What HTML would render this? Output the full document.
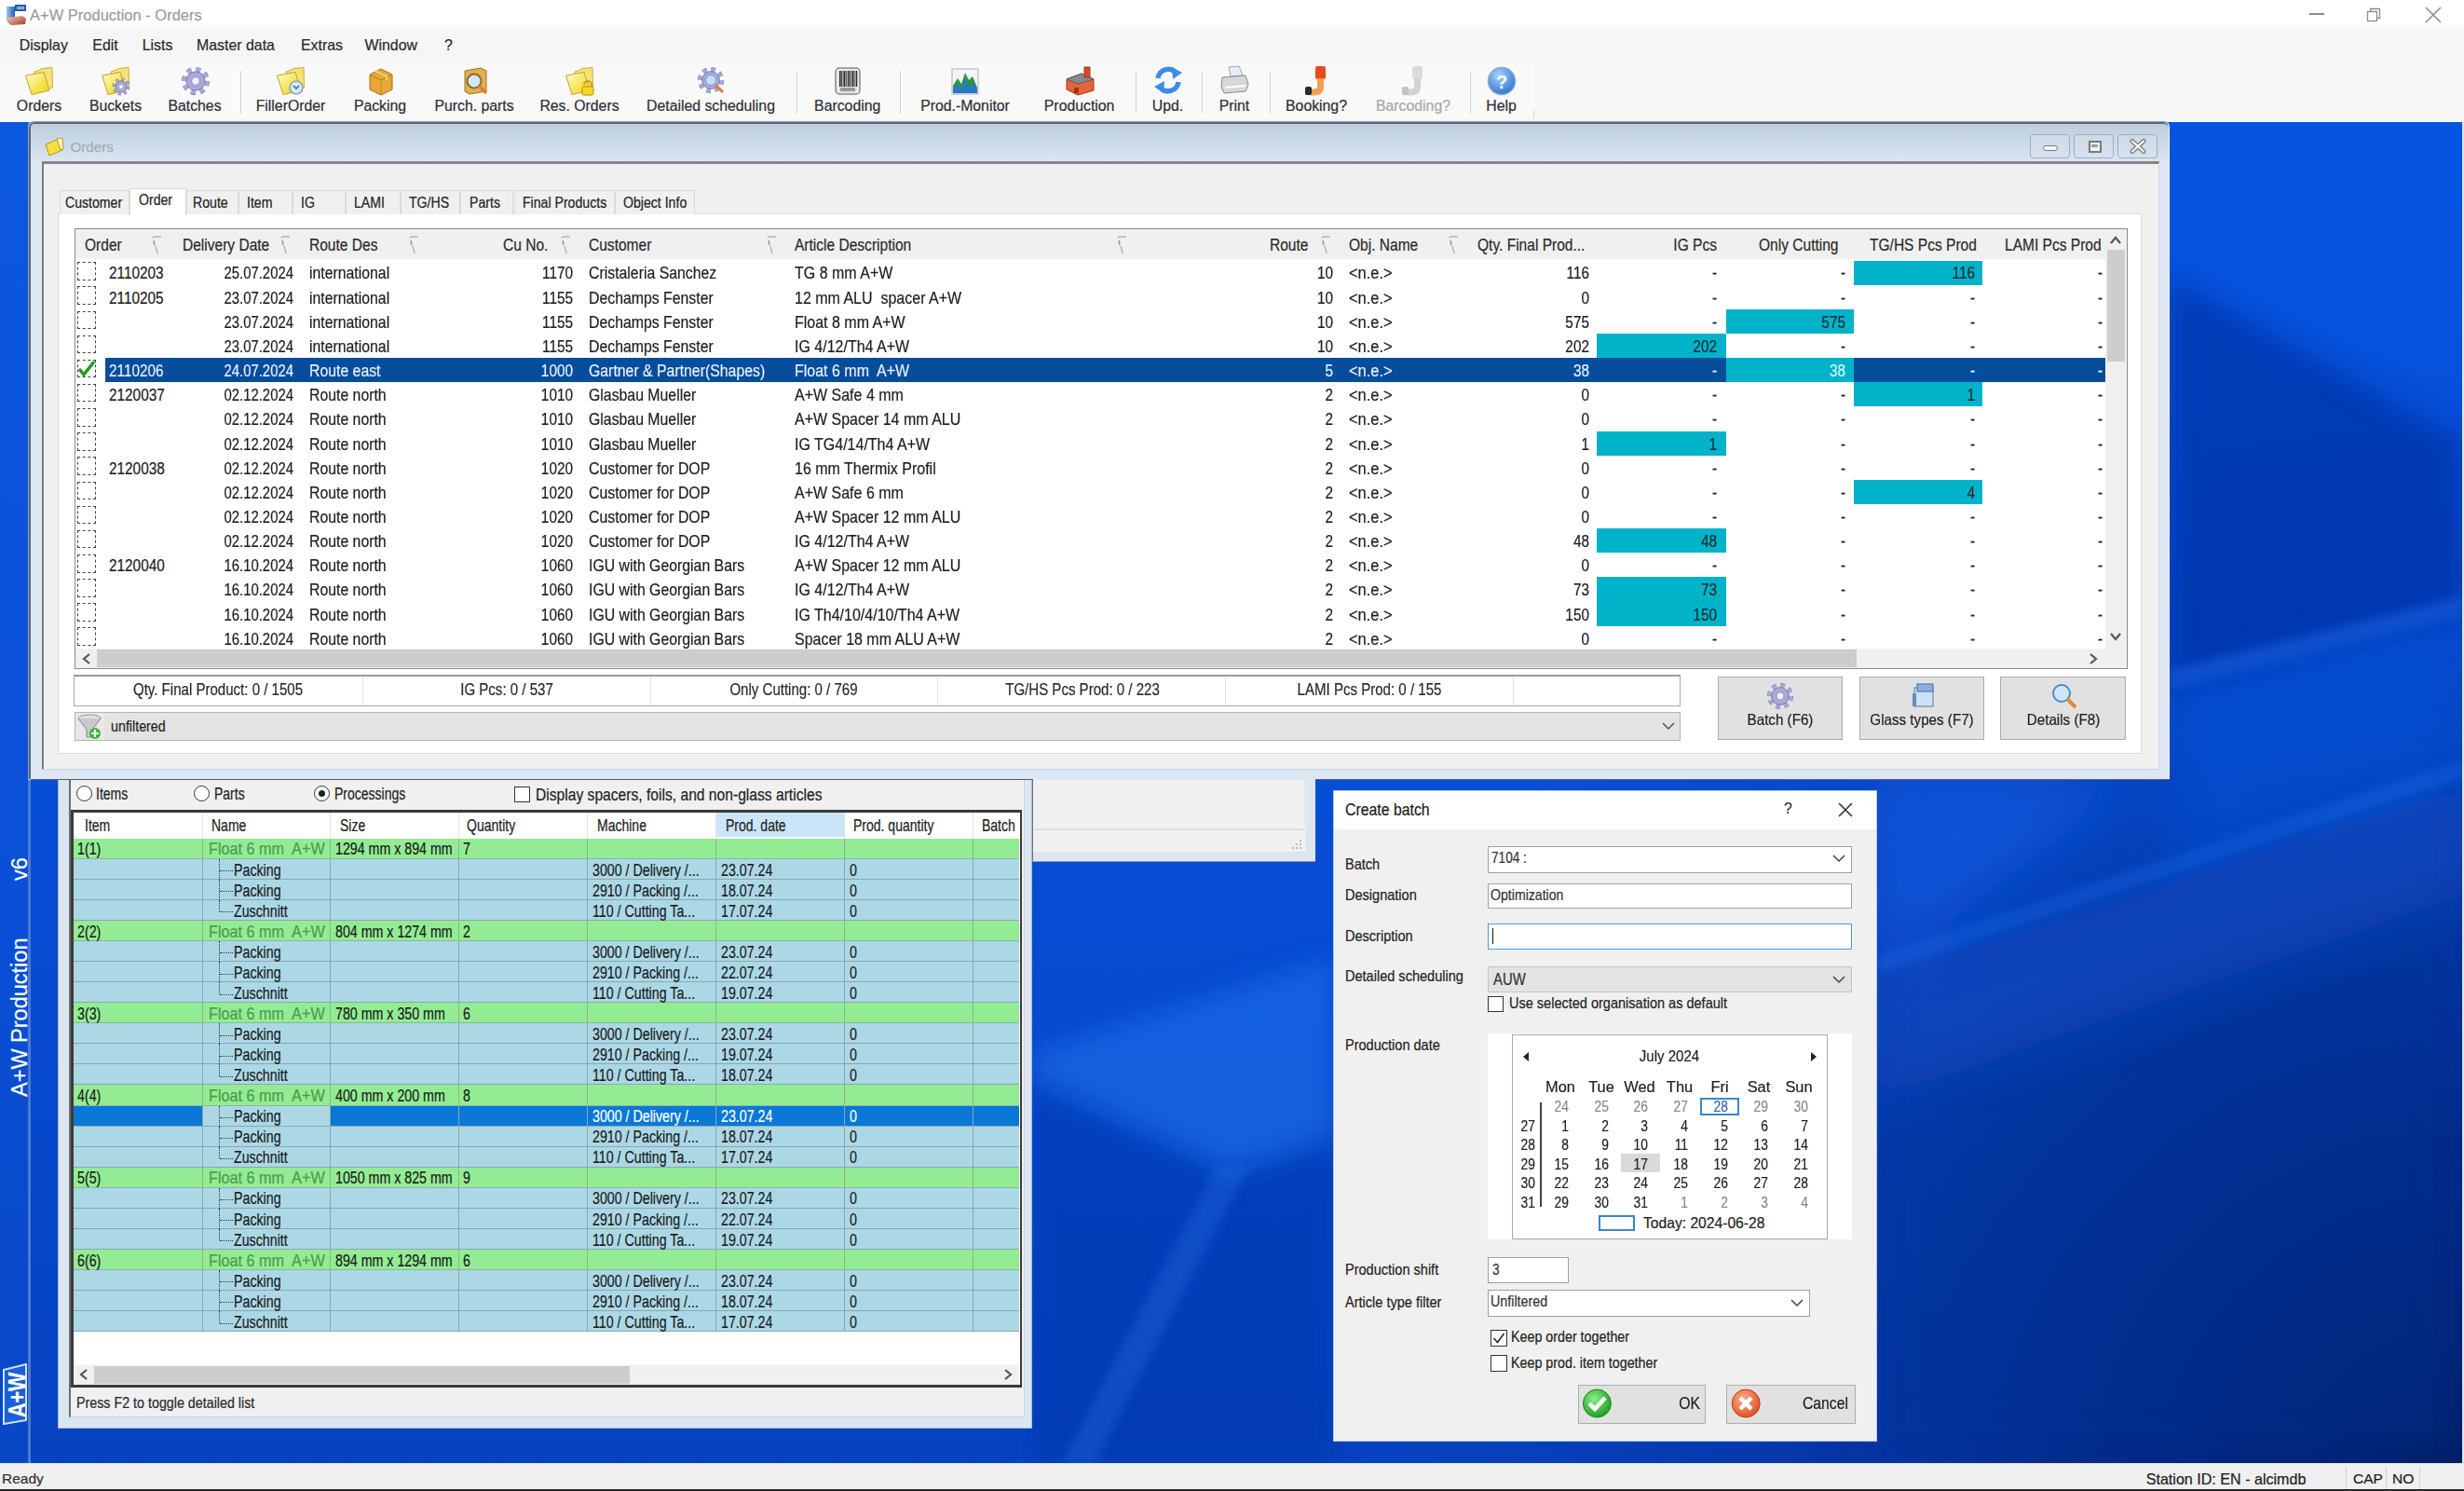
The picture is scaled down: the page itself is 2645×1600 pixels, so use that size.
<!DOCTYPE html>
<html><head><meta charset="utf-8"><title>A+W Production - Orders</title>
<style>
html,body{margin:0;padding:0;}
body{width:2645px;height:1600px;overflow:hidden;position:relative;font-family:"Liberation Sans", sans-serif;background:#0a4fd2;-webkit-text-stroke:0.2px currentColor;}
div,svg{box-sizing:border-box;}
</style></head><body>
<svg style="position:absolute;left:0px;top:0px;" width="2645" height="1600" viewBox="0 0 2645 1600">
<defs>
<linearGradient id="bgv" x1="0" y1="131" x2="0" y2="1570" gradientUnits="userSpaceOnUse">
<stop offset="0" stop-color="#0654e0"/>
<stop offset="0.5" stop-color="#074ed6"/>
<stop offset="1" stop-color="#0642c0"/>
</linearGradient>
<radialGradient id="dark" cx="2645" cy="1600" r="1250" gradientUnits="userSpaceOnUse">
<stop offset="0" stop-color="#021a5a" stop-opacity="1"/>
<stop offset="0.3" stop-color="#03237c" stop-opacity="0.9"/>
<stop offset="0.65" stop-color="#05329c" stop-opacity="0.45"/>
<stop offset="1" stop-color="#0640b8" stop-opacity="0"/>
</radialGradient>
<filter id="b6" x="-20%" y="-20%" width="140%" height="140%"><feGaussianBlur stdDeviation="6"/></filter>
<filter id="b14" x="-20%" y="-20%" width="140%" height="140%"><feGaussianBlur stdDeviation="14"/></filter>
<filter id="b30" x="-20%" y="-20%" width="140%" height="140%"><feGaussianBlur stdDeviation="30"/></filter>
</defs>
<rect x="0" y="131" width="2645" height="1440" fill="url(#bgv)"/>
<rect x="0" y="131" width="2645" height="1440" fill="url(#dark)"/>
<g filter="url(#b30)">
<polygon points="2014,1045 2645,835 2645,1570 2014,1570" fill="#05309a" opacity="0.45"/>
<polygon points="2014,836 2300,836 2014,1040" fill="#0c5ee6" opacity="0.6"/>
<polygon points="2014,1050 2645,840 2645,960 2014,1180" fill="#1460e0" opacity="0.35"/>
<polygon points="2329,745 2645,665 2645,830 2329,930" fill="#0a56e0" opacity="0.45"/>
</g>
<g filter="url(#b14)">
<polygon points="2329,297 2583,439 2645,470 2645,648 2329,728" fill="#0834a8" opacity="0.72"/>
<polygon points="1109,1129 1431,1029 1431,1218 1321,1254 1109,1155" fill="#1f72ee" opacity="0.55"/>
<polygon points="1109,1165 1321,1260 1431,1225 1431,1570 1109,1570" fill="#0838a8" opacity="0.45"/>
</g>
<g filter="url(#b6)">
<polygon points="2329,720 2645,640 2645,658 2329,738" fill="#2a7af2" opacity="0.3"/>
<polygon points="2014,1026 2645,816 2645,834 2014,1044" fill="#1c6cf0" opacity="0.35"/>
<polygon points="1305,1252 1340,1252 1175,1570 1140,1570" fill="#2a7af0" opacity="0.28"/>
</g>
</svg><div style="position:absolute;left:0px;top:131px;width:30px;height:1440px;background:linear-gradient(180deg,#0d58e0 0%,#0a4fd6 60%,#0847c4 100%);"></div><div style="position:absolute;left:30px;top:131px;width:3px;height:1440px;background:#4a7ad4;"></div><div style="position:absolute;left:6.5px;top:1177px;height:28px;transform-origin:0 0;transform:rotate(-90deg);white-space:pre;color:#fff;font-size:23.5px;line-height:28px;">A+W Production</div><div style="position:absolute;left:6.5px;top:945px;height:28px;transform-origin:0 0;transform:rotate(-90deg);white-space:pre;color:#fff;font-size:23.5px;line-height:28px;">v6</div><svg style="position:absolute;left:2px;top:1462px;" width="28" height="68" viewBox="0 0 28 68"><polygon points="2,8 26,2 26,62 2,66" fill="#1a5fd8" stroke="#cfe0ff" stroke-width="2"/></svg><div style="position:absolute;left:5px;top:1521px;height:26px;transform-origin:0 0;transform:rotate(-90deg) scaleX(0.86);white-space:pre;color:#fff;font-size:25px;font-weight:bold;line-height:26px;">A+W</div><div style="position:absolute;left:0px;top:0px;width:2645px;height:32px;background:linear-gradient(180deg,#ffffff 0px,#ffffff 24px,#f8f8f8 32px);"></div><svg style="position:absolute;left:4px;top:2px;" width="24" height="26" viewBox="0 0 24 26"><defs><linearGradient id="aic" x1="0" y1="0" x2="1" y2="0"><stop offset="0" stop-color="#9cc8f0"/><stop offset="1" stop-color="#2a5aa8"/></linearGradient><linearGradient id="aic2" x1="0" y1="0" x2="1" y2="1"><stop offset="0" stop-color="#f4c8b8"/><stop offset="1" stop-color="#a03a2a"/></linearGradient></defs><rect x="3" y="5" width="9" height="15" fill="url(#aic)"/><rect x="12" y="3" width="12" height="7" fill="#2e5a98"/><rect x="14" y="5" width="8" height="3" fill="#8ab0e0"/><path d="M4 17 L20 15 L24 18 L23 24 L8 25 L4 22 Z" fill="url(#aic2)"/></svg><div style="position:absolute;left:32px;top:5.78px;height:21.45px;line-height:21.45px;font-size:16.5px;color:#9b9b9b;white-space:pre;">A+W Production - Orders</div><div style="position:absolute;left:2479px;top:14px;width:16px;height:1.5px;background:#8a8a8a;"></div><svg style="position:absolute;left:2538px;top:6px;" width="20" height="20" viewBox="0 0 20 20"><rect x="3.5" y="6.5" width="10" height="10" fill="none" stroke="#8a8a8a" stroke-width="1.3"/><path d="M6.5 6.5 V3.5 H16.5 V13.5 H13.5" fill="none" stroke="#8a8a8a" stroke-width="1.3"/></svg><svg style="position:absolute;left:2601px;top:5px;" width="22" height="22" viewBox="0 0 22 22"><path d="M3 3 L19 19 M19 3 L3 19" stroke="#8a8a8a" stroke-width="1.5"/></svg><div style="position:absolute;left:0px;top:32px;width:2645px;height:34px;background:#f6f6f6;"></div><div style="position:absolute;left:20.8px;top:38.96px;height:20.67px;line-height:20.67px;font-size:15.9px;color:#2a2a2a;white-space:pre;">Display</div><div style="position:absolute;left:99.3px;top:38.96px;height:20.67px;line-height:20.67px;font-size:15.9px;color:#2a2a2a;white-space:pre;">Edit</div><div style="position:absolute;left:152.7px;top:38.96px;height:20.67px;line-height:20.67px;font-size:15.9px;color:#2a2a2a;white-space:pre;">Lists</div><div style="position:absolute;left:211px;top:38.96px;height:20.67px;line-height:20.67px;font-size:15.9px;color:#2a2a2a;white-space:pre;">Master data</div><div style="position:absolute;left:323px;top:38.96px;height:20.67px;line-height:20.67px;font-size:15.9px;color:#2a2a2a;white-space:pre;">Extras</div><div style="position:absolute;left:391.5px;top:38.96px;height:20.67px;line-height:20.67px;font-size:15.9px;color:#2a2a2a;white-space:pre;">Window</div><div style="position:absolute;left:477px;top:38.96px;height:20.67px;line-height:20.67px;font-size:15.9px;color:#2a2a2a;white-space:pre;">?</div><div style="position:absolute;left:0px;top:66px;width:2645px;height:65px;background:#f7f7f7;"></div><div style="position:absolute;left:4px;top:67px;width:1643px;height:60px;background:#f9f9f9;"></div><div style="position:absolute;left:257.5px;top:76px;width:1.2px;height:46px;background:#d4d4d4;"></div><div style="position:absolute;left:854.6px;top:76px;width:1.2px;height:46px;background:#d4d4d4;"></div><div style="position:absolute;left:966px;top:76px;width:1.2px;height:46px;background:#d4d4d4;"></div><div style="position:absolute;left:1219px;top:76px;width:1.2px;height:46px;background:#d4d4d4;"></div><div style="position:absolute;left:1290px;top:76px;width:1.2px;height:46px;background:#d4d4d4;"></div><div style="position:absolute;left:1363px;top:76px;width:1.2px;height:46px;background:#d4d4d4;"></div><div style="position:absolute;left:1578px;top:76px;width:1.2px;height:46px;background:#d4d4d4;"></div><div style="position:absolute;left:1646px;top:118px;width:1px;height:9px;background:#d8d8d8;"></div><div style="position:absolute;left:-558px;width:1200px;text-align:center;top:104.03px;height:20.54px;line-height:20.54px;font-size:15.8px;color:#2e2e36;white-space:pre;">Orders</div><div style="position:absolute;left:-476px;width:1200px;text-align:center;top:104.03px;height:20.54px;line-height:20.54px;font-size:15.8px;color:#2e2e36;white-space:pre;">Buckets</div><div style="position:absolute;left:-391px;width:1200px;text-align:center;top:104.03px;height:20.54px;line-height:20.54px;font-size:15.8px;color:#2e2e36;white-space:pre;">Batches</div><div style="position:absolute;left:-288px;width:1200px;text-align:center;top:104.03px;height:20.54px;line-height:20.54px;font-size:15.8px;color:#2e2e36;white-space:pre;">FillerOrder</div><div style="position:absolute;left:-192px;width:1200px;text-align:center;top:104.03px;height:20.54px;line-height:20.54px;font-size:15.8px;color:#2e2e36;white-space:pre;">Packing</div><div style="position:absolute;left:-91px;width:1200px;text-align:center;top:104.03px;height:20.54px;line-height:20.54px;font-size:15.8px;color:#2e2e36;white-space:pre;">Purch. parts</div><div style="position:absolute;left:22px;width:1200px;text-align:center;top:104.03px;height:20.54px;line-height:20.54px;font-size:15.8px;color:#2e2e36;white-space:pre;">Res. Orders</div><div style="position:absolute;left:163px;width:1200px;text-align:center;top:104.03px;height:20.54px;line-height:20.54px;font-size:15.8px;color:#2e2e36;white-space:pre;">Detailed scheduling</div><div style="position:absolute;left:309.70000000000005px;width:1200px;text-align:center;top:104.03px;height:20.54px;line-height:20.54px;font-size:15.8px;color:#2e2e36;white-space:pre;">Barcoding</div><div style="position:absolute;left:436px;width:1200px;text-align:center;top:104.03px;height:20.54px;line-height:20.54px;font-size:15.8px;color:#2e2e36;white-space:pre;">Prod.-Monitor</div><div style="position:absolute;left:558.5999999999999px;width:1200px;text-align:center;top:104.03px;height:20.54px;line-height:20.54px;font-size:15.8px;color:#2e2e36;white-space:pre;">Production</div><div style="position:absolute;left:653.5px;width:1200px;text-align:center;top:104.03px;height:20.54px;line-height:20.54px;font-size:15.8px;color:#2e2e36;white-space:pre;">Upd.</div><div style="position:absolute;left:725px;width:1200px;text-align:center;top:104.03px;height:20.54px;line-height:20.54px;font-size:15.8px;color:#2e2e36;white-space:pre;">Print</div><div style="position:absolute;left:813px;width:1200px;text-align:center;top:104.03px;height:20.54px;line-height:20.54px;font-size:15.8px;color:#2e2e36;white-space:pre;">Booking?</div><div style="position:absolute;left:917px;width:1200px;text-align:center;top:104.03px;height:20.54px;line-height:20.54px;font-size:15.8px;color:#a8a8a8;white-space:pre;">Barcoding?</div><div style="position:absolute;left:1011.5px;width:1200px;text-align:center;top:104.03px;height:20.54px;line-height:20.54px;font-size:15.8px;color:#2e2e36;white-space:pre;">Help</div><svg style="position:absolute;left:26px;top:71.6px;" width="34" height="32" viewBox="0 0 34 32"><defs><linearGradient id="g1" x1="0" y1="0" x2="1" y2="1"><stop offset="0" stop-color="#fffbd0"/><stop offset="1" stop-color="#f2d200"/></linearGradient></defs>
<path d="M11 5 L17 3 L19 1.5 L30 0.5 L30.5 22 L13 27 Z" fill="#f4e27a" stroke="#c9ad38" stroke-width="1"/>
<path d="M1.5 9 L21 5.5 L27 25 L8 29.5 Z" fill="url(#g1)" stroke="#c4a22a" stroke-width="1"/></svg><svg style="position:absolute;left:108px;top:71.6px;" width="34" height="32" viewBox="0 0 34 32"><defs><linearGradient id="g2" x1="0" y1="0" x2="1" y2="1"><stop offset="0" stop-color="#fffbd0"/><stop offset="1" stop-color="#f2d200"/></linearGradient></defs>
<path d="M11 5 L17 3 L19 1.5 L30 0.5 L30.5 22 L13 27 Z" fill="#f4e27a" stroke="#c9ad38" stroke-width="1"/>
<path d="M1.5 9 L21 5.5 L27 25 L8 29.5 Z" fill="url(#g2)" stroke="#c4a22a" stroke-width="1"/><circle cx="22" cy="21" r="7.48" fill="none" stroke="#8080b8" stroke-width="3.95" stroke-dasharray="2.94 2.94"/><circle cx="22" cy="21" r="7.48" fill="none" stroke="#a9a9da" stroke-width="2.55" stroke-dasharray="2.94 2.94"/><circle cx="22" cy="21" r="6.12" fill="#a9a9da" stroke="#7a7ab4" stroke-width="1"/><circle cx="22" cy="21" r="2.55" fill="#f4f4fc" stroke="#8a8ac0" stroke-width="0.8"/></svg><svg style="position:absolute;left:194px;top:71px;" width="32" height="32" viewBox="0 0 32 32"><circle cx="16" cy="16" r="12.32" fill="none" stroke="#8080b8" stroke-width="5.60" stroke-dasharray="4.84 4.84"/><circle cx="16" cy="16" r="12.32" fill="none" stroke="#a9a9da" stroke-width="4.20" stroke-dasharray="4.84 4.84"/><circle cx="16" cy="16" r="10.08" fill="#a9a9da" stroke="#7a7ab4" stroke-width="1"/><circle cx="16" cy="16" r="4.20" fill="#f4f4fc" stroke="#8a8ac0" stroke-width="0.8"/></svg><svg style="position:absolute;left:296px;top:71.6px;" width="34" height="32" viewBox="0 0 34 32"><defs><linearGradient id="g3" x1="0" y1="0" x2="1" y2="1"><stop offset="0" stop-color="#fffbd0"/><stop offset="1" stop-color="#f2d200"/></linearGradient></defs>
<path d="M11 5 L17 3 L19 1.5 L30 0.5 L30.5 22 L13 27 Z" fill="#f4e27a" stroke="#c9ad38" stroke-width="1"/>
<path d="M1.5 9 L21 5.5 L27 25 L8 29.5 Z" fill="url(#g3)" stroke="#c4a22a" stroke-width="1"/><circle cx="22" cy="22" r="7" fill="#d8e8fa" stroke="#6a8ac0" stroke-width="1.2"/><path d="M19 20 L22 23 L25 20" stroke="#3a6ab0" stroke-width="1.6" fill="none"/></svg><svg style="position:absolute;left:393px;top:70px;" width="32" height="34" viewBox="0 0 32 34"><path d="M4 10 L16 4 L28 10 L28 26 L16 32 L4 26 Z" fill="#e8a838" stroke="#a86a10"/><path d="M4 10 L16 16 L28 10" stroke="#b87818" fill="none"/><path d="M16 16 L16 32" stroke="#c88a28"/><path d="M10 6 L22 12 L22 16" stroke="#f8d070" stroke-width="2" fill="none"/></svg><svg style="position:absolute;left:494px;top:70px;" width="34" height="34" viewBox="0 0 34 34"><path d="M5 6 L22 3 L28 6 L28 28 L10 31 L5 28 Z" fill="#e0b050" stroke="#a07020"/><circle cx="15" cy="17" r="7.5" fill="#cfe8fa" stroke="#8a6a30" stroke-width="2"/><path d="M20 22 L28 30" stroke="#e07a38" stroke-width="3.2"/></svg><svg style="position:absolute;left:606px;top:71.6px;" width="34" height="32" viewBox="0 0 34 32"><defs><linearGradient id="g4" x1="0" y1="0" x2="1" y2="1"><stop offset="0" stop-color="#fffbd0"/><stop offset="1" stop-color="#f2d200"/></linearGradient></defs>
<path d="M11 5 L17 3 L19 1.5 L30 0.5 L30.5 22 L13 27 Z" fill="#f4e27a" stroke="#c9ad38" stroke-width="1"/>
<path d="M1.5 9 L21 5.5 L27 25 L8 29.5 Z" fill="url(#g4)" stroke="#c4a22a" stroke-width="1"/><path d="M21 19 A4 4 0 0 1 29 19 L29 22" stroke="#c8a020" stroke-width="2" fill="none"/><rect x="19" y="21" width="12" height="9" rx="1.5" fill="#f8d820" stroke="#b09010"/></svg><svg style="position:absolute;left:747px;top:70px;" width="34" height="34" viewBox="0 0 34 34"><circle cx="16" cy="16" r="11.44" fill="none" stroke="#8080b8" stroke-width="5.30" stroke-dasharray="4.49 4.49"/><circle cx="16" cy="16" r="11.44" fill="none" stroke="#a9a9da" stroke-width="3.90" stroke-dasharray="4.49 4.49"/><circle cx="16" cy="16" r="9.36" fill="#a9a9da" stroke="#7a7ab4" stroke-width="1"/><circle cx="16" cy="16" r="3.90" fill="#f4f4fc" stroke="#8a8ac0" stroke-width="0.8"/><circle cx="16" cy="16" r="5.5" fill="#bfe0f8" stroke="#7aa0c8"/><path d="M21 21 L29 29" stroke="#e07a38" stroke-width="3"/></svg><svg style="position:absolute;left:894px;top:70px;" width="32" height="34" viewBox="0 0 32 34"><rect x="3" y="3" width="26" height="28" rx="4" fill="#e8e8e8" stroke="#8a8a8a" stroke-width="1.5"/><rect x="7.0" y="6" width="1.6" height="17" fill="#2a2a2a"/><rect x="9.2" y="6" width="1.1" height="17" fill="#2a2a2a"/><rect x="11.4" y="6" width="1.6" height="17" fill="#2a2a2a"/><rect x="13.6" y="6" width="1.1" height="17" fill="#2a2a2a"/><rect x="15.8" y="6" width="1.6" height="17" fill="#2a2a2a"/><rect x="18.0" y="6" width="1.1" height="17" fill="#2a2a2a"/><rect x="20.2" y="6" width="1.6" height="17" fill="#2a2a2a"/><rect x="22.4" y="6" width="1.1" height="17" fill="#2a2a2a"/><rect x="24.6" y="6" width="1.6" height="17" fill="#2a2a2a"/><rect x="8" y="24" width="16" height="4" fill="#9a9a9a"/></svg><svg style="position:absolute;left:1020px;top:70px;" width="32" height="34" viewBox="0 0 32 34"><rect x="2" y="4" width="28" height="27" fill="#f2f6fa" stroke="#a8b0b8"/><path d="M3 30 L3 22 L8 14 L12 20 L16 8 L20 16 L24 12 L29 24 L29 30 Z" fill="#2a9a3a"/><path d="M3 30 L3 26 L7 20 L12 26 L15 14 L20 24 L25 18 L29 26 L29 30 Z" fill="#2a78c8"/></svg><svg style="position:absolute;left:1141px;top:69px;" width="36" height="34" viewBox="0 0 36 34"><path d="M4 16 L20 10 L33 16 L33 28 L16 33 L4 27 Z" fill="#e8623a" stroke="#a03818"/><path d="M4 16 L16 21 L33 16 L20 10 Z" fill="#8a8a8a" stroke="#5a5a5a"/><rect x="23" y="3" width="6" height="11" fill="#d8482a" stroke="#a03818"/><rect x="12" y="25" width="5" height="6" fill="#a03818"/></svg><svg style="position:absolute;left:1236px;top:69px;" width="36" height="34" viewBox="0 0 36 34"><path d="M7 15 A11 11 0 0 1 27 10" stroke="#3a8ee8" stroke-width="5.5" fill="none"/><path d="M29 19 A11 11 0 0 1 9 24" stroke="#3a8ee8" stroke-width="5.5" fill="none"/><polygon points="22,3 33,9 23,16" fill="#3a8ee8"/><polygon points="14,18 3,24 13,31" fill="#3a8ee8"/></svg><svg style="position:absolute;left:1309px;top:69px;" width="34" height="34" viewBox="0 0 34 34"><path d="M10 3 L21 2 L25 12 L12 13 Z" fill="#e4eefa" stroke="#9aa8b8"/><path d="M3 14 L28 12 L31 22 L28 29 L5 31 L2 24 Z" fill="#d8d8d8" stroke="#8a8a8a"/><path d="M6 25 L28 23" stroke="#fff" stroke-width="2"/></svg><svg style="position:absolute;left:1398px;top:69px;" width="32" height="34" viewBox="0 0 32 34"><rect x="14" y="2" width="11" height="14" rx="2" fill="#e84a20"/><path d="M19.5 15 L19.5 24 Q19.5 30 12 30 L9 30" stroke="#f4a050" stroke-width="7" fill="none"/><rect x="3" y="24" width="7" height="9" rx="2" fill="#2a2a2a"/></svg><svg style="position:absolute;left:1502px;top:69px;" width="32" height="34" viewBox="0 0 32 34"><rect x="14" y="2" width="11" height="14" rx="2" fill="#dadada"/><path d="M19.5 15 L19.5 24 Q19.5 30 12 30 L9 30" stroke="#d2d2d2" stroke-width="7" fill="none"/><rect x="3" y="24" width="7" height="9" rx="2" fill="#c4c4c4"/></svg><svg style="position:absolute;left:1595px;top:70px;" width="34" height="34" viewBox="0 0 34 34"><defs><radialGradient id="hlp" cx="0.4" cy="0.3" r="0.75"><stop offset="0" stop-color="#a8d4fa"/><stop offset="1" stop-color="#2a70d0"/></radialGradient></defs><circle cx="17" cy="17" r="14.5" fill="url(#hlp)" stroke="#8aa8d0" stroke-width="1.5"/><text x="17" y="24.5" font-size="20" font-weight="bold" text-anchor="middle" fill="#fff" font-family="Liberation Sans" style="-webkit-text-stroke:0">?</text></svg><div style="position:absolute;left:0px;top:1570px;width:2645px;height:30px;background:#f0f0f0;border-top:1px solid #e2e2e2;"></div><div style="position:absolute;left:2643px;top:131px;width:2px;height:1440px;background:#dfe6ee;"></div><div style="position:absolute;left:2px;top:1576.92px;height:20.15px;line-height:20.15px;font-size:15.5px;color:#303030;white-space:pre;">Ready</div><div style="position:absolute;left:2303.7px;top:1576.54px;height:20.93px;line-height:20.93px;font-size:16.1px;color:#202020;white-space:pre;">Station ID: EN - alcimdb</div><div style="position:absolute;left:2518px;top:1574px;width:1px;height:24px;background:#d0d0d0;"></div><div style="position:absolute;left:2561px;top:1574px;width:1px;height:24px;background:#d0d0d0;"></div><div style="position:absolute;left:2597px;top:1574px;width:1px;height:24px;background:#d0d0d0;"></div><div style="position:absolute;left:2526px;top:1576.92px;height:20.15px;line-height:20.15px;font-size:15.5px;color:#202020;white-space:pre;">CAP</div><div style="position:absolute;left:2568px;top:1576.92px;height:20.15px;line-height:20.15px;font-size:15.5px;color:#202020;white-space:pre;">NO</div><div style="position:absolute;left:0px;top:1598.4px;width:2645px;height:1.6px;background:#2a2a2a;"></div><div style="position:absolute;left:30px;top:130px;width:2299px;height:707px;background:#dbe6f2;border-top:1px solid #8ea2bf;border-left:1px solid #8ea2bf;border-right:1px solid #eef4fa;border-radius:6px 6px 0 0;"></div><div style="position:absolute;left:31px;top:131px;width:2297px;height:705px;border-top:2px solid #5f6670;border-left:2px solid #5f6670;border-radius:6px 6px 0 0;background:linear-gradient(180deg,#bfcedd 0px,#d2dfec 30px,#dce7f3 42px,#dce7f3 100%);"></div><svg style="position:absolute;left:47px;top:146px;" width="24" height="22" viewBox="0 0 24 22"><path d="M2 9 L16 3 L20 15 L6 21 Z" fill="#f5e040" stroke="#b09a20"/><path d="M14 3 L20 2 L21 14 L18 15 Z" fill="#fff8c0" stroke="#b09a20"/></svg><div style="position:absolute;left:75.5px;top:148.12px;height:19.76px;line-height:19.76px;font-size:15.2px;color:#a3acb6;white-space:pre;">Orders</div><div style="position:absolute;left:2179px;top:144px;width:43px;height:26px;border:1px solid #9eabbd;border-radius:4px;background:linear-gradient(180deg,rgba(255,255,255,0.12),rgba(255,255,255,0.02));"></div><div style="position:absolute;left:2226px;top:144px;width:43px;height:26px;border:1px solid #9eabbd;border-radius:4px;background:linear-gradient(180deg,rgba(255,255,255,0.12),rgba(255,255,255,0.02));"></div><div style="position:absolute;left:2273px;top:144px;width:43px;height:26px;border:1px solid #9eabbd;border-radius:4px;background:linear-gradient(180deg,rgba(255,255,255,0.12),rgba(255,255,255,0.02));"></div><div style="position:absolute;left:2193px;top:155.5px;width:16px;height:6.5px;border:1.6px solid #7c7c7c;border-radius:3px;background:#f6f6f6;"></div><div style="position:absolute;left:2241.5px;top:151px;width:14px;height:12.5px;border:2.2px solid #7a7a7a;background:#f2f2f2;"></div><div style="position:absolute;left:2245px;top:155px;width:7px;height:2.5px;background:#9a9a9a;border-radius:1px;"></div><svg style="position:absolute;left:2283px;top:148px;" width="24" height="18" viewBox="0 0 24 18"><path d="M6 3.5 L18 14.5 M18 3.5 L6 14.5" stroke="#7f7f7f" stroke-width="5" stroke-linecap="round"/><path d="M6 3.5 L18 14.5 M18 3.5 L6 14.5" stroke="#f8f8f8" stroke-width="2.2" stroke-linecap="round"/></svg><div style="position:absolute;left:45px;top:173px;width:2273px;height:653px;border-top:3.5px solid #858585;border-left:2px solid #7a7a7a;border-right:1px solid #c8d4e0;border-bottom:1px solid #c8d4e0;background:#f0f0f0;"></div><div style="position:absolute;left:62px;top:229px;width:2237px;height:580px;background:#ffffff;border:1px solid #dadada;"></div><div style="position:absolute;left:63.5px;top:203.5px;width:75.1px;height:26.5px;background:#f0f0f0;border:1px solid #dadada;border-bottom:none;"></div><div style="position:absolute;left:70.4px;top:206.55px;height:22.1px;line-height:22.1px;font-size:17px;color:#222;white-space:pre;transform:scale(0.83,1.0);transform-origin:left center;">Customer</div><div style="position:absolute;left:200.2px;top:203.5px;width:55.5px;height:26.5px;background:#f0f0f0;border:1px solid #dadada;border-bottom:none;"></div><div style="position:absolute;left:207px;top:206.55px;height:22.1px;line-height:22.1px;font-size:17px;color:#222;white-space:pre;transform:scale(0.83,1.0);transform-origin:left center;">Route</div><div style="position:absolute;left:255.7px;top:203.5px;width:58.0px;height:26.5px;background:#f0f0f0;border:1px solid #dadada;border-bottom:none;"></div><div style="position:absolute;left:264.7px;top:206.55px;height:22.1px;line-height:22.1px;font-size:17px;color:#222;white-space:pre;transform:scale(0.83,1.0);transform-origin:left center;">Item</div><div style="position:absolute;left:313.7px;top:203.5px;width:57.0px;height:26.5px;background:#f0f0f0;border:1px solid #dadada;border-bottom:none;"></div><div style="position:absolute;left:322.7px;top:206.55px;height:22.1px;line-height:22.1px;font-size:17px;color:#222;white-space:pre;transform:scale(0.83,1.0);transform-origin:left center;">IG</div><div style="position:absolute;left:370.7px;top:203.5px;width:59.30000000000001px;height:26.5px;background:#f0f0f0;border:1px solid #dadada;border-bottom:none;"></div><div style="position:absolute;left:380.3px;top:206.55px;height:22.1px;line-height:22.1px;font-size:17px;color:#222;white-space:pre;transform:scale(0.83,1.0);transform-origin:left center;">LAMI</div><div style="position:absolute;left:430px;top:203.5px;width:63.80000000000001px;height:26.5px;background:#f0f0f0;border:1px solid #dadada;border-bottom:none;"></div><div style="position:absolute;left:438.9px;top:206.55px;height:22.1px;line-height:22.1px;font-size:17px;color:#222;white-space:pre;transform:scale(0.83,1.0);transform-origin:left center;">TG/HS</div><div style="position:absolute;left:493.8px;top:203.5px;width:57.69999999999999px;height:26.5px;background:#f0f0f0;border:1px solid #dadada;border-bottom:none;"></div><div style="position:absolute;left:503.5px;top:206.55px;height:22.1px;line-height:22.1px;font-size:17px;color:#222;white-space:pre;transform:scale(0.83,1.0);transform-origin:left center;">Parts</div><div style="position:absolute;left:551.5px;top:203.5px;width:108.10000000000002px;height:26.5px;background:#f0f0f0;border:1px solid #dadada;border-bottom:none;"></div><div style="position:absolute;left:561px;top:206.55px;height:22.1px;line-height:22.1px;font-size:17px;color:#222;white-space:pre;transform:scale(0.83,1.0);transform-origin:left center;">Final Products</div><div style="position:absolute;left:659.6px;top:203.5px;width:86.39999999999998px;height:26.5px;background:#f0f0f0;border:1px solid #dadada;border-bottom:none;"></div><div style="position:absolute;left:668.6px;top:206.55px;height:22.1px;line-height:22.1px;font-size:17px;color:#222;white-space:pre;transform:scale(0.83,1.0);transform-origin:left center;">Object Info</div><div style="position:absolute;left:138.6px;top:201.5px;width:61.6px;height:29px;background:#ffffff;border:1px solid #dadada;border-bottom:none;"></div><div style="position:absolute;left:148.5px;top:204.45px;height:22.1px;line-height:22.1px;font-size:17px;color:#222;white-space:pre;transform:scale(0.83,1.0);transform-origin:left center;">Order</div><div style="position:absolute;left:80px;top:245px;width:2204px;height:473px;background:#fff;border:1px solid #8a8a8a;"></div><div style="position:absolute;left:81px;top:246px;width:2179px;height:32px;background:#f0f0f0;"></div><div style="position:absolute;left:90.5px;top:251.1px;height:23.79px;line-height:23.79px;font-size:18.3px;color:#2a2a2a;white-space:pre;transform:scale(0.85,1.0);transform-origin:left center;">Order</div><div style="position:absolute;left:196px;top:251.1px;height:23.79px;line-height:23.79px;font-size:18.3px;color:#2a2a2a;white-space:pre;transform:scale(0.85,1.0);transform-origin:left center;">Delivery Date</div><div style="position:absolute;left:332px;top:251.1px;height:23.79px;line-height:23.79px;font-size:18.3px;color:#2a2a2a;white-space:pre;transform:scale(0.85,1.0);transform-origin:left center;">Route Des</div><div style="position:absolute;left:539.5px;top:251.1px;height:23.79px;line-height:23.79px;font-size:18.3px;color:#2a2a2a;white-space:pre;transform:scale(0.85,1.0);transform-origin:left center;">Cu No.</div><div style="position:absolute;left:631.7px;top:251.1px;height:23.79px;line-height:23.79px;font-size:18.3px;color:#2a2a2a;white-space:pre;transform:scale(0.85,1.0);transform-origin:left center;">Customer</div><div style="position:absolute;left:853.4px;top:251.1px;height:23.79px;line-height:23.79px;font-size:18.3px;color:#2a2a2a;white-space:pre;transform:scale(0.85,1.0);transform-origin:left center;">Article Description</div><div style="position:absolute;left:1363px;top:251.1px;height:23.79px;line-height:23.79px;font-size:18.3px;color:#2a2a2a;white-space:pre;transform:scale(0.85,1.0);transform-origin:left center;">Route</div><div style="position:absolute;left:1447.7px;top:251.1px;height:23.79px;line-height:23.79px;font-size:18.3px;color:#2a2a2a;white-space:pre;transform:scale(0.85,1.0);transform-origin:left center;">Obj. Name</div><div style="position:absolute;left:1586px;top:251.1px;height:23.79px;line-height:23.79px;font-size:18.3px;color:#2a2a2a;white-space:pre;transform:scale(0.85,1.0);transform-origin:left center;">Qty. Final Prod...</div><div style="position:absolute;left:643px;width:1200px;text-align:right;top:251.1px;height:23.79px;line-height:23.79px;font-size:18.3px;color:#2a2a2a;white-space:pre;transform:scale(0.85,1.0);transform-origin:right center;">IG Pcs</div><div style="position:absolute;left:1888px;top:251.1px;height:23.79px;line-height:23.79px;font-size:18.3px;color:#2a2a2a;white-space:pre;transform:scale(0.85,1.0);transform-origin:left center;">Only Cutting</div><div style="position:absolute;left:2007px;top:251.1px;height:23.79px;line-height:23.79px;font-size:18.3px;color:#2a2a2a;white-space:pre;transform:scale(0.85,1.0);transform-origin:left center;">TG/HS Pcs Prod</div><div style="position:absolute;left:2152px;top:251.1px;height:23.79px;line-height:23.79px;font-size:18.3px;color:#2a2a2a;white-space:pre;transform:scale(0.85,1.0);transform-origin:left center;">LAMI Pcs Prod</div><svg style="position:absolute;left:160px;top:252px;" width="14" height="22" viewBox="0 0 14 22"><path d="M4 3.5 Q4.5 2 6 2 L13 2" fill="none" stroke="#b4b4b4" stroke-width="1.6"/><path d="M5.2 6 L5.8 11" stroke="#9a9a9a" stroke-width="1.7"/><path d="M6.8 12 L9.2 20" stroke="#bcbcbc" stroke-width="1.7"/></svg><svg style="position:absolute;left:298px;top:252px;" width="14" height="22" viewBox="0 0 14 22"><path d="M4 3.5 Q4.5 2 6 2 L13 2" fill="none" stroke="#b4b4b4" stroke-width="1.6"/><path d="M5.2 6 L5.8 11" stroke="#9a9a9a" stroke-width="1.7"/><path d="M6.8 12 L9.2 20" stroke="#bcbcbc" stroke-width="1.7"/></svg><svg style="position:absolute;left:436px;top:252px;" width="14" height="22" viewBox="0 0 14 22"><path d="M4 3.5 Q4.5 2 6 2 L13 2" fill="none" stroke="#b4b4b4" stroke-width="1.6"/><path d="M5.2 6 L5.8 11" stroke="#9a9a9a" stroke-width="1.7"/><path d="M6.8 12 L9.2 20" stroke="#bcbcbc" stroke-width="1.7"/></svg><svg style="position:absolute;left:598.5px;top:252px;" width="14" height="22" viewBox="0 0 14 22"><path d="M4 3.5 Q4.5 2 6 2 L13 2" fill="none" stroke="#b4b4b4" stroke-width="1.6"/><path d="M5.2 6 L5.8 11" stroke="#9a9a9a" stroke-width="1.7"/><path d="M6.8 12 L9.2 20" stroke="#bcbcbc" stroke-width="1.7"/></svg><svg style="position:absolute;left:820px;top:252px;" width="14" height="22" viewBox="0 0 14 22"><path d="M4 3.5 Q4.5 2 6 2 L13 2" fill="none" stroke="#b4b4b4" stroke-width="1.6"/><path d="M5.2 6 L5.8 11" stroke="#9a9a9a" stroke-width="1.7"/><path d="M6.8 12 L9.2 20" stroke="#bcbcbc" stroke-width="1.7"/></svg><svg style="position:absolute;left:1196.4px;top:252px;" width="14" height="22" viewBox="0 0 14 22"><path d="M4 3.5 Q4.5 2 6 2 L13 2" fill="none" stroke="#b4b4b4" stroke-width="1.6"/><path d="M5.2 6 L5.8 11" stroke="#9a9a9a" stroke-width="1.7"/><path d="M6.8 12 L9.2 20" stroke="#bcbcbc" stroke-width="1.7"/></svg><svg style="position:absolute;left:1414.6px;top:252px;" width="14" height="22" viewBox="0 0 14 22"><path d="M4 3.5 Q4.5 2 6 2 L13 2" fill="none" stroke="#b4b4b4" stroke-width="1.6"/><path d="M5.2 6 L5.8 11" stroke="#9a9a9a" stroke-width="1.7"/><path d="M6.8 12 L9.2 20" stroke="#bcbcbc" stroke-width="1.7"/></svg><svg style="position:absolute;left:1551.7px;top:252px;" width="14" height="22" viewBox="0 0 14 22"><path d="M4 3.5 Q4.5 2 6 2 L13 2" fill="none" stroke="#b4b4b4" stroke-width="1.6"/><path d="M5.2 6 L5.8 11" stroke="#9a9a9a" stroke-width="1.7"/><path d="M6.8 12 L9.2 20" stroke="#bcbcbc" stroke-width="1.7"/></svg><div style="position:absolute;left:1990px;top:279.5px;width:138px;height:26.15px;background:#00b3c9;"></div><div style="position:absolute;left:83px;top:281.2px;width:19.5px;height:19.5px;border:1.6px dashed #404040;background:#fff;"></div><div style="position:absolute;left:117px;top:281.49px;height:23.79px;line-height:23.79px;font-size:18.3px;color:#202020;white-space:pre;transform:scale(0.84,1.0);transform-origin:left center;">2110203</div><div style="position:absolute;left:-885px;width:1200px;text-align:right;top:281.49px;height:23.79px;line-height:23.79px;font-size:18.3px;color:#202020;white-space:pre;transform:scale(0.815,1.0);transform-origin:right center;">25.07.2024</div><div style="position:absolute;left:332px;top:281.49px;height:23.79px;line-height:23.79px;font-size:18.3px;color:#202020;white-space:pre;transform:scale(0.865,1.0);transform-origin:left center;">international</div><div style="position:absolute;left:-585.4px;width:1200px;text-align:right;top:281.49px;height:23.79px;line-height:23.79px;font-size:18.3px;color:#202020;white-space:pre;transform:scale(0.84,1.0);transform-origin:right center;">1170</div><div style="position:absolute;left:631.5px;top:281.49px;height:23.79px;line-height:23.79px;font-size:18.3px;color:#202020;white-space:pre;transform:scale(0.866,1.0);transform-origin:left center;">Cristaleria Sanchez</div><div style="position:absolute;left:853.4px;top:281.49px;height:23.79px;line-height:23.79px;font-size:18.3px;color:#202020;white-space:pre;transform:scale(0.875,1.0);transform-origin:left center;">TG 8 mm A+W</div><div style="position:absolute;left:230.70000000000005px;width:1200px;text-align:right;top:281.49px;height:23.79px;line-height:23.79px;font-size:18.3px;color:#202020;white-space:pre;transform:scale(0.84,1.0);transform-origin:right center;">10</div><div style="position:absolute;left:1447.7px;top:281.49px;height:23.79px;line-height:23.79px;font-size:18.3px;color:#202020;white-space:pre;transform:scale(0.9,1.0);transform-origin:left center;">&lt;n.e.&gt;</div><div style="position:absolute;left:506px;width:1200px;text-align:right;top:281.49px;height:23.79px;line-height:23.79px;font-size:18.3px;color:#202020;white-space:pre;transform:scale(0.84,1.0);transform-origin:right center;">116</div><div style="position:absolute;left:643px;width:1200px;text-align:right;top:281.49px;height:23.79px;line-height:23.79px;font-size:18.3px;color:#202020;white-space:pre;transform:scale(0.84,1.0);transform-origin:right center;">-</div><div style="position:absolute;left:781px;width:1200px;text-align:right;top:281.49px;height:23.79px;line-height:23.79px;font-size:18.3px;color:#202020;white-space:pre;transform:scale(0.84,1.0);transform-origin:right center;">-</div><div style="position:absolute;left:920px;width:1200px;text-align:right;top:281.49px;height:23.79px;line-height:23.79px;font-size:18.3px;color:#1a2a30;white-space:pre;transform:scale(0.84,1.0);transform-origin:right center;">116</div><div style="position:absolute;left:1057px;width:1200px;text-align:right;top:281.49px;height:23.79px;line-height:23.79px;font-size:18.3px;color:#202020;white-space:pre;transform:scale(0.84,1.0);transform-origin:right center;">-</div><div style="position:absolute;left:83px;top:307.35px;width:19.5px;height:19.5px;border:1.6px dashed #404040;background:#fff;"></div><div style="position:absolute;left:117px;top:307.62px;height:23.79px;line-height:23.79px;font-size:18.3px;color:#202020;white-space:pre;transform:scale(0.84,1.0);transform-origin:left center;">2110205</div><div style="position:absolute;left:-885px;width:1200px;text-align:right;top:307.62px;height:23.79px;line-height:23.79px;font-size:18.3px;color:#202020;white-space:pre;transform:scale(0.815,1.0);transform-origin:right center;">23.07.2024</div><div style="position:absolute;left:332px;top:307.62px;height:23.79px;line-height:23.79px;font-size:18.3px;color:#202020;white-space:pre;transform:scale(0.865,1.0);transform-origin:left center;">international</div><div style="position:absolute;left:-585.4px;width:1200px;text-align:right;top:307.62px;height:23.79px;line-height:23.79px;font-size:18.3px;color:#202020;white-space:pre;transform:scale(0.84,1.0);transform-origin:right center;">1155</div><div style="position:absolute;left:631.5px;top:307.62px;height:23.79px;line-height:23.79px;font-size:18.3px;color:#202020;white-space:pre;transform:scale(0.866,1.0);transform-origin:left center;">Dechamps Fenster</div><div style="position:absolute;left:853.4px;top:307.62px;height:23.79px;line-height:23.79px;font-size:18.3px;color:#202020;white-space:pre;transform:scale(0.875,1.0);transform-origin:left center;">12 mm ALU  spacer A+W</div><div style="position:absolute;left:230.70000000000005px;width:1200px;text-align:right;top:307.62px;height:23.79px;line-height:23.79px;font-size:18.3px;color:#202020;white-space:pre;transform:scale(0.84,1.0);transform-origin:right center;">10</div><div style="position:absolute;left:1447.7px;top:307.62px;height:23.79px;line-height:23.79px;font-size:18.3px;color:#202020;white-space:pre;transform:scale(0.9,1.0);transform-origin:left center;">&lt;n.e.&gt;</div><div style="position:absolute;left:506px;width:1200px;text-align:right;top:307.62px;height:23.79px;line-height:23.79px;font-size:18.3px;color:#202020;white-space:pre;transform:scale(0.84,1.0);transform-origin:right center;">0</div><div style="position:absolute;left:643px;width:1200px;text-align:right;top:307.62px;height:23.79px;line-height:23.79px;font-size:18.3px;color:#202020;white-space:pre;transform:scale(0.84,1.0);transform-origin:right center;">-</div><div style="position:absolute;left:781px;width:1200px;text-align:right;top:307.62px;height:23.79px;line-height:23.79px;font-size:18.3px;color:#202020;white-space:pre;transform:scale(0.84,1.0);transform-origin:right center;">-</div><div style="position:absolute;left:920px;width:1200px;text-align:right;top:307.62px;height:23.79px;line-height:23.79px;font-size:18.3px;color:#202020;white-space:pre;transform:scale(0.84,1.0);transform-origin:right center;">-</div><div style="position:absolute;left:1057px;width:1200px;text-align:right;top:307.62px;height:23.79px;line-height:23.79px;font-size:18.3px;color:#202020;white-space:pre;transform:scale(0.84,1.0);transform-origin:right center;">-</div><div style="position:absolute;left:1852.7px;top:331.8px;width:137.29999999999995px;height:26.15px;background:#00b3c9;"></div><div style="position:absolute;left:83px;top:333.5px;width:19.5px;height:19.5px;border:1.6px dashed #404040;background:#fff;"></div><div style="position:absolute;left:-885px;width:1200px;text-align:right;top:333.79px;height:23.79px;line-height:23.79px;font-size:18.3px;color:#202020;white-space:pre;transform:scale(0.815,1.0);transform-origin:right center;">23.07.2024</div><div style="position:absolute;left:332px;top:333.79px;height:23.79px;line-height:23.79px;font-size:18.3px;color:#202020;white-space:pre;transform:scale(0.865,1.0);transform-origin:left center;">international</div><div style="position:absolute;left:-585.4px;width:1200px;text-align:right;top:333.79px;height:23.79px;line-height:23.79px;font-size:18.3px;color:#202020;white-space:pre;transform:scale(0.84,1.0);transform-origin:right center;">1155</div><div style="position:absolute;left:631.5px;top:333.79px;height:23.79px;line-height:23.79px;font-size:18.3px;color:#202020;white-space:pre;transform:scale(0.866,1.0);transform-origin:left center;">Dechamps Fenster</div><div style="position:absolute;left:853.4px;top:333.79px;height:23.79px;line-height:23.79px;font-size:18.3px;color:#202020;white-space:pre;transform:scale(0.875,1.0);transform-origin:left center;">Float 8 mm A+W</div><div style="position:absolute;left:230.70000000000005px;width:1200px;text-align:right;top:333.79px;height:23.79px;line-height:23.79px;font-size:18.3px;color:#202020;white-space:pre;transform:scale(0.84,1.0);transform-origin:right center;">10</div><div style="position:absolute;left:1447.7px;top:333.79px;height:23.79px;line-height:23.79px;font-size:18.3px;color:#202020;white-space:pre;transform:scale(0.9,1.0);transform-origin:left center;">&lt;n.e.&gt;</div><div style="position:absolute;left:506px;width:1200px;text-align:right;top:333.79px;height:23.79px;line-height:23.79px;font-size:18.3px;color:#202020;white-space:pre;transform:scale(0.84,1.0);transform-origin:right center;">575</div><div style="position:absolute;left:643px;width:1200px;text-align:right;top:333.79px;height:23.79px;line-height:23.79px;font-size:18.3px;color:#202020;white-space:pre;transform:scale(0.84,1.0);transform-origin:right center;">-</div><div style="position:absolute;left:781px;width:1200px;text-align:right;top:333.79px;height:23.79px;line-height:23.79px;font-size:18.3px;color:#1a2a30;white-space:pre;transform:scale(0.84,1.0);transform-origin:right center;">575</div><div style="position:absolute;left:920px;width:1200px;text-align:right;top:333.79px;height:23.79px;line-height:23.79px;font-size:18.3px;color:#202020;white-space:pre;transform:scale(0.84,1.0);transform-origin:right center;">-</div><div style="position:absolute;left:1057px;width:1200px;text-align:right;top:333.79px;height:23.79px;line-height:23.79px;font-size:18.3px;color:#202020;white-space:pre;transform:scale(0.84,1.0);transform-origin:right center;">-</div><div style="position:absolute;left:1714.4px;top:357.95px;width:138.29999999999995px;height:26.15px;background:#00b3c9;"></div><div style="position:absolute;left:83px;top:359.65px;width:19.5px;height:19.5px;border:1.6px dashed #404040;background:#fff;"></div><div style="position:absolute;left:-885px;width:1200px;text-align:right;top:359.93px;height:23.79px;line-height:23.79px;font-size:18.3px;color:#202020;white-space:pre;transform:scale(0.815,1.0);transform-origin:right center;">23.07.2024</div><div style="position:absolute;left:332px;top:359.93px;height:23.79px;line-height:23.79px;font-size:18.3px;color:#202020;white-space:pre;transform:scale(0.865,1.0);transform-origin:left center;">international</div><div style="position:absolute;left:-585.4px;width:1200px;text-align:right;top:359.93px;height:23.79px;line-height:23.79px;font-size:18.3px;color:#202020;white-space:pre;transform:scale(0.84,1.0);transform-origin:right center;">1155</div><div style="position:absolute;left:631.5px;top:359.93px;height:23.79px;line-height:23.79px;font-size:18.3px;color:#202020;white-space:pre;transform:scale(0.866,1.0);transform-origin:left center;">Dechamps Fenster</div><div style="position:absolute;left:853.4px;top:359.93px;height:23.79px;line-height:23.79px;font-size:18.3px;color:#202020;white-space:pre;transform:scale(0.875,1.0);transform-origin:left center;">IG 4/12/Th4 A+W</div><div style="position:absolute;left:230.70000000000005px;width:1200px;text-align:right;top:359.93px;height:23.79px;line-height:23.79px;font-size:18.3px;color:#202020;white-space:pre;transform:scale(0.84,1.0);transform-origin:right center;">10</div><div style="position:absolute;left:1447.7px;top:359.93px;height:23.79px;line-height:23.79px;font-size:18.3px;color:#202020;white-space:pre;transform:scale(0.9,1.0);transform-origin:left center;">&lt;n.e.&gt;</div><div style="position:absolute;left:506px;width:1200px;text-align:right;top:359.93px;height:23.79px;line-height:23.79px;font-size:18.3px;color:#202020;white-space:pre;transform:scale(0.84,1.0);transform-origin:right center;">202</div><div style="position:absolute;left:643px;width:1200px;text-align:right;top:359.93px;height:23.79px;line-height:23.79px;font-size:18.3px;color:#1a2a30;white-space:pre;transform:scale(0.84,1.0);transform-origin:right center;">202</div><div style="position:absolute;left:781px;width:1200px;text-align:right;top:359.93px;height:23.79px;line-height:23.79px;font-size:18.3px;color:#202020;white-space:pre;transform:scale(0.84,1.0);transform-origin:right center;">-</div><div style="position:absolute;left:920px;width:1200px;text-align:right;top:359.93px;height:23.79px;line-height:23.79px;font-size:18.3px;color:#202020;white-space:pre;transform:scale(0.84,1.0);transform-origin:right center;">-</div><div style="position:absolute;left:1057px;width:1200px;text-align:right;top:359.93px;height:23.79px;line-height:23.79px;font-size:18.3px;color:#202020;white-space:pre;transform:scale(0.84,1.0);transform-origin:right center;">-</div><div style="position:absolute;left:113px;top:384.1px;width:2147px;height:26.15px;background:#064d9c;"></div><div style="position:absolute;left:1852.7px;top:384.1px;width:137.29999999999995px;height:26.15px;background:#00b3c9;"></div><div style="position:absolute;left:83px;top:385.8px;width:19.5px;height:19.5px;border:1.6px dashed #404040;background:#fff;"></div><svg style="position:absolute;left:82px;top:385.1px;" width="22" height="20" viewBox="0 0 22 20"><path d="M3 11 L8 17 L19 3" stroke="#18a018" stroke-width="3.5" fill="none"/></svg><div style="position:absolute;left:117px;top:386.09px;height:23.79px;line-height:23.79px;font-size:18.3px;color:#e6f0ff;white-space:pre;transform:scale(0.84,1.0);transform-origin:left center;">2110206</div><div style="position:absolute;left:-885px;width:1200px;text-align:right;top:386.09px;height:23.79px;line-height:23.79px;font-size:18.3px;color:#e6f0ff;white-space:pre;transform:scale(0.815,1.0);transform-origin:right center;">24.07.2024</div><div style="position:absolute;left:332px;top:386.09px;height:23.79px;line-height:23.79px;font-size:18.3px;color:#e6f0ff;white-space:pre;transform:scale(0.865,1.0);transform-origin:left center;">Route east</div><div style="position:absolute;left:-585.4px;width:1200px;text-align:right;top:386.09px;height:23.79px;line-height:23.79px;font-size:18.3px;color:#e6f0ff;white-space:pre;transform:scale(0.84,1.0);transform-origin:right center;">1000</div><div style="position:absolute;left:631.5px;top:386.09px;height:23.79px;line-height:23.79px;font-size:18.3px;color:#e6f0ff;white-space:pre;transform:scale(0.866,1.0);transform-origin:left center;">Gartner &amp; Partner(Shapes)</div><div style="position:absolute;left:853.4px;top:386.09px;height:23.79px;line-height:23.79px;font-size:18.3px;color:#e6f0ff;white-space:pre;transform:scale(0.875,1.0);transform-origin:left center;">Float 6 mm  A+W</div><div style="position:absolute;left:230.70000000000005px;width:1200px;text-align:right;top:386.09px;height:23.79px;line-height:23.79px;font-size:18.3px;color:#e6f0ff;white-space:pre;transform:scale(0.84,1.0);transform-origin:right center;">5</div><div style="position:absolute;left:1447.7px;top:386.09px;height:23.79px;line-height:23.79px;font-size:18.3px;color:#e6f0ff;white-space:pre;transform:scale(0.9,1.0);transform-origin:left center;">&lt;n.e.&gt;</div><div style="position:absolute;left:506px;width:1200px;text-align:right;top:386.09px;height:23.79px;line-height:23.79px;font-size:18.3px;color:#e6f0ff;white-space:pre;transform:scale(0.84,1.0);transform-origin:right center;">38</div><div style="position:absolute;left:643px;width:1200px;text-align:right;top:386.09px;height:23.79px;line-height:23.79px;font-size:18.3px;color:#e6f0ff;white-space:pre;transform:scale(0.84,1.0);transform-origin:right center;">-</div><div style="position:absolute;left:781px;width:1200px;text-align:right;top:386.09px;height:23.79px;line-height:23.79px;font-size:18.3px;color:#d8f4ff;white-space:pre;transform:scale(0.84,1.0);transform-origin:right center;">38</div><div style="position:absolute;left:920px;width:1200px;text-align:right;top:386.09px;height:23.79px;line-height:23.79px;font-size:18.3px;color:#e6f0ff;white-space:pre;transform:scale(0.84,1.0);transform-origin:right center;">-</div><div style="position:absolute;left:1057px;width:1200px;text-align:right;top:386.09px;height:23.79px;line-height:23.79px;font-size:18.3px;color:#e6f0ff;white-space:pre;transform:scale(0.84,1.0);transform-origin:right center;">-</div><div style="position:absolute;left:1990px;top:410.25px;width:138px;height:26.15px;background:#00b3c9;"></div><div style="position:absolute;left:83px;top:411.95px;width:19.5px;height:19.5px;border:1.6px dashed #404040;background:#fff;"></div><div style="position:absolute;left:117px;top:412.23px;height:23.79px;line-height:23.79px;font-size:18.3px;color:#202020;white-space:pre;transform:scale(0.84,1.0);transform-origin:left center;">2120037</div><div style="position:absolute;left:-885px;width:1200px;text-align:right;top:412.23px;height:23.79px;line-height:23.79px;font-size:18.3px;color:#202020;white-space:pre;transform:scale(0.815,1.0);transform-origin:right center;">02.12.2024</div><div style="position:absolute;left:332px;top:412.23px;height:23.79px;line-height:23.79px;font-size:18.3px;color:#202020;white-space:pre;transform:scale(0.865,1.0);transform-origin:left center;">Route north</div><div style="position:absolute;left:-585.4px;width:1200px;text-align:right;top:412.23px;height:23.79px;line-height:23.79px;font-size:18.3px;color:#202020;white-space:pre;transform:scale(0.84,1.0);transform-origin:right center;">1010</div><div style="position:absolute;left:631.5px;top:412.23px;height:23.79px;line-height:23.79px;font-size:18.3px;color:#202020;white-space:pre;transform:scale(0.866,1.0);transform-origin:left center;">Glasbau Mueller</div><div style="position:absolute;left:853.4px;top:412.23px;height:23.79px;line-height:23.79px;font-size:18.3px;color:#202020;white-space:pre;transform:scale(0.875,1.0);transform-origin:left center;">A+W Safe 4 mm</div><div style="position:absolute;left:230.70000000000005px;width:1200px;text-align:right;top:412.23px;height:23.79px;line-height:23.79px;font-size:18.3px;color:#202020;white-space:pre;transform:scale(0.84,1.0);transform-origin:right center;">2</div><div style="position:absolute;left:1447.7px;top:412.23px;height:23.79px;line-height:23.79px;font-size:18.3px;color:#202020;white-space:pre;transform:scale(0.9,1.0);transform-origin:left center;">&lt;n.e.&gt;</div><div style="position:absolute;left:506px;width:1200px;text-align:right;top:412.23px;height:23.79px;line-height:23.79px;font-size:18.3px;color:#202020;white-space:pre;transform:scale(0.84,1.0);transform-origin:right center;">0</div><div style="position:absolute;left:643px;width:1200px;text-align:right;top:412.23px;height:23.79px;line-height:23.79px;font-size:18.3px;color:#202020;white-space:pre;transform:scale(0.84,1.0);transform-origin:right center;">-</div><div style="position:absolute;left:781px;width:1200px;text-align:right;top:412.23px;height:23.79px;line-height:23.79px;font-size:18.3px;color:#202020;white-space:pre;transform:scale(0.84,1.0);transform-origin:right center;">-</div><div style="position:absolute;left:920px;width:1200px;text-align:right;top:412.23px;height:23.79px;line-height:23.79px;font-size:18.3px;color:#1a2a30;white-space:pre;transform:scale(0.84,1.0);transform-origin:right center;">1</div><div style="position:absolute;left:1057px;width:1200px;text-align:right;top:412.23px;height:23.79px;line-height:23.79px;font-size:18.3px;color:#202020;white-space:pre;transform:scale(0.84,1.0);transform-origin:right center;">-</div><div style="position:absolute;left:83px;top:438.1px;width:19.5px;height:19.5px;border:1.6px dashed #404040;background:#fff;"></div><div style="position:absolute;left:-885px;width:1200px;text-align:right;top:438.38px;height:23.79px;line-height:23.79px;font-size:18.3px;color:#202020;white-space:pre;transform:scale(0.815,1.0);transform-origin:right center;">02.12.2024</div><div style="position:absolute;left:332px;top:438.38px;height:23.79px;line-height:23.79px;font-size:18.3px;color:#202020;white-space:pre;transform:scale(0.865,1.0);transform-origin:left center;">Route north</div><div style="position:absolute;left:-585.4px;width:1200px;text-align:right;top:438.38px;height:23.79px;line-height:23.79px;font-size:18.3px;color:#202020;white-space:pre;transform:scale(0.84,1.0);transform-origin:right center;">1010</div><div style="position:absolute;left:631.5px;top:438.38px;height:23.79px;line-height:23.79px;font-size:18.3px;color:#202020;white-space:pre;transform:scale(0.866,1.0);transform-origin:left center;">Glasbau Mueller</div><div style="position:absolute;left:853.4px;top:438.38px;height:23.79px;line-height:23.79px;font-size:18.3px;color:#202020;white-space:pre;transform:scale(0.875,1.0);transform-origin:left center;">A+W Spacer 14 mm ALU</div><div style="position:absolute;left:230.70000000000005px;width:1200px;text-align:right;top:438.38px;height:23.79px;line-height:23.79px;font-size:18.3px;color:#202020;white-space:pre;transform:scale(0.84,1.0);transform-origin:right center;">2</div><div style="position:absolute;left:1447.7px;top:438.38px;height:23.79px;line-height:23.79px;font-size:18.3px;color:#202020;white-space:pre;transform:scale(0.9,1.0);transform-origin:left center;">&lt;n.e.&gt;</div><div style="position:absolute;left:506px;width:1200px;text-align:right;top:438.38px;height:23.79px;line-height:23.79px;font-size:18.3px;color:#202020;white-space:pre;transform:scale(0.84,1.0);transform-origin:right center;">0</div><div style="position:absolute;left:643px;width:1200px;text-align:right;top:438.38px;height:23.79px;line-height:23.79px;font-size:18.3px;color:#202020;white-space:pre;transform:scale(0.84,1.0);transform-origin:right center;">-</div><div style="position:absolute;left:781px;width:1200px;text-align:right;top:438.38px;height:23.79px;line-height:23.79px;font-size:18.3px;color:#202020;white-space:pre;transform:scale(0.84,1.0);transform-origin:right center;">-</div><div style="position:absolute;left:920px;width:1200px;text-align:right;top:438.38px;height:23.79px;line-height:23.79px;font-size:18.3px;color:#202020;white-space:pre;transform:scale(0.84,1.0);transform-origin:right center;">-</div><div style="position:absolute;left:1057px;width:1200px;text-align:right;top:438.38px;height:23.79px;line-height:23.79px;font-size:18.3px;color:#202020;white-space:pre;transform:scale(0.84,1.0);transform-origin:right center;">-</div><div style="position:absolute;left:1714.4px;top:462.55px;width:138.29999999999995px;height:26.15px;background:#00b3c9;"></div><div style="position:absolute;left:83px;top:464.25px;width:19.5px;height:19.5px;border:1.6px dashed #404040;background:#fff;"></div><div style="position:absolute;left:-885px;width:1200px;text-align:right;top:464.53px;height:23.79px;line-height:23.79px;font-size:18.3px;color:#202020;white-space:pre;transform:scale(0.815,1.0);transform-origin:right center;">02.12.2024</div><div style="position:absolute;left:332px;top:464.53px;height:23.79px;line-height:23.79px;font-size:18.3px;color:#202020;white-space:pre;transform:scale(0.865,1.0);transform-origin:left center;">Route north</div><div style="position:absolute;left:-585.4px;width:1200px;text-align:right;top:464.53px;height:23.79px;line-height:23.79px;font-size:18.3px;color:#202020;white-space:pre;transform:scale(0.84,1.0);transform-origin:right center;">1010</div><div style="position:absolute;left:631.5px;top:464.53px;height:23.79px;line-height:23.79px;font-size:18.3px;color:#202020;white-space:pre;transform:scale(0.866,1.0);transform-origin:left center;">Glasbau Mueller</div><div style="position:absolute;left:853.4px;top:464.53px;height:23.79px;line-height:23.79px;font-size:18.3px;color:#202020;white-space:pre;transform:scale(0.875,1.0);transform-origin:left center;">IG TG4/14/Th4 A+W</div><div style="position:absolute;left:230.70000000000005px;width:1200px;text-align:right;top:464.53px;height:23.79px;line-height:23.79px;font-size:18.3px;color:#202020;white-space:pre;transform:scale(0.84,1.0);transform-origin:right center;">2</div><div style="position:absolute;left:1447.7px;top:464.53px;height:23.79px;line-height:23.79px;font-size:18.3px;color:#202020;white-space:pre;transform:scale(0.9,1.0);transform-origin:left center;">&lt;n.e.&gt;</div><div style="position:absolute;left:506px;width:1200px;text-align:right;top:464.53px;height:23.79px;line-height:23.79px;font-size:18.3px;color:#202020;white-space:pre;transform:scale(0.84,1.0);transform-origin:right center;">1</div><div style="position:absolute;left:643px;width:1200px;text-align:right;top:464.53px;height:23.79px;line-height:23.79px;font-size:18.3px;color:#1a2a30;white-space:pre;transform:scale(0.84,1.0);transform-origin:right center;">1</div><div style="position:absolute;left:781px;width:1200px;text-align:right;top:464.53px;height:23.79px;line-height:23.79px;font-size:18.3px;color:#202020;white-space:pre;transform:scale(0.84,1.0);transform-origin:right center;">-</div><div style="position:absolute;left:920px;width:1200px;text-align:right;top:464.53px;height:23.79px;line-height:23.79px;font-size:18.3px;color:#202020;white-space:pre;transform:scale(0.84,1.0);transform-origin:right center;">-</div><div style="position:absolute;left:1057px;width:1200px;text-align:right;top:464.53px;height:23.79px;line-height:23.79px;font-size:18.3px;color:#202020;white-space:pre;transform:scale(0.84,1.0);transform-origin:right center;">-</div><div style="position:absolute;left:83px;top:490.4px;width:19.5px;height:19.5px;border:1.6px dashed #404040;background:#fff;"></div><div style="position:absolute;left:117px;top:490.68px;height:23.79px;line-height:23.79px;font-size:18.3px;color:#202020;white-space:pre;transform:scale(0.84,1.0);transform-origin:left center;">2120038</div><div style="position:absolute;left:-885px;width:1200px;text-align:right;top:490.68px;height:23.79px;line-height:23.79px;font-size:18.3px;color:#202020;white-space:pre;transform:scale(0.815,1.0);transform-origin:right center;">02.12.2024</div><div style="position:absolute;left:332px;top:490.68px;height:23.79px;line-height:23.79px;font-size:18.3px;color:#202020;white-space:pre;transform:scale(0.865,1.0);transform-origin:left center;">Route north</div><div style="position:absolute;left:-585.4px;width:1200px;text-align:right;top:490.68px;height:23.79px;line-height:23.79px;font-size:18.3px;color:#202020;white-space:pre;transform:scale(0.84,1.0);transform-origin:right center;">1020</div><div style="position:absolute;left:631.5px;top:490.68px;height:23.79px;line-height:23.79px;font-size:18.3px;color:#202020;white-space:pre;transform:scale(0.866,1.0);transform-origin:left center;">Customer for DOP</div><div style="position:absolute;left:853.4px;top:490.68px;height:23.79px;line-height:23.79px;font-size:18.3px;color:#202020;white-space:pre;transform:scale(0.875,1.0);transform-origin:left center;">16 mm Thermix Profil</div><div style="position:absolute;left:230.70000000000005px;width:1200px;text-align:right;top:490.68px;height:23.79px;line-height:23.79px;font-size:18.3px;color:#202020;white-space:pre;transform:scale(0.84,1.0);transform-origin:right center;">2</div><div style="position:absolute;left:1447.7px;top:490.68px;height:23.79px;line-height:23.79px;font-size:18.3px;color:#202020;white-space:pre;transform:scale(0.9,1.0);transform-origin:left center;">&lt;n.e.&gt;</div><div style="position:absolute;left:506px;width:1200px;text-align:right;top:490.68px;height:23.79px;line-height:23.79px;font-size:18.3px;color:#202020;white-space:pre;transform:scale(0.84,1.0);transform-origin:right center;">0</div><div style="position:absolute;left:643px;width:1200px;text-align:right;top:490.68px;height:23.79px;line-height:23.79px;font-size:18.3px;color:#202020;white-space:pre;transform:scale(0.84,1.0);transform-origin:right center;">-</div><div style="position:absolute;left:781px;width:1200px;text-align:right;top:490.68px;height:23.79px;line-height:23.79px;font-size:18.3px;color:#202020;white-space:pre;transform:scale(0.84,1.0);transform-origin:right center;">-</div><div style="position:absolute;left:920px;width:1200px;text-align:right;top:490.68px;height:23.79px;line-height:23.79px;font-size:18.3px;color:#202020;white-space:pre;transform:scale(0.84,1.0);transform-origin:right center;">-</div><div style="position:absolute;left:1057px;width:1200px;text-align:right;top:490.68px;height:23.79px;line-height:23.79px;font-size:18.3px;color:#202020;white-space:pre;transform:scale(0.84,1.0);transform-origin:right center;">-</div><div style="position:absolute;left:1990px;top:514.85px;width:138px;height:26.15px;background:#00b3c9;"></div><div style="position:absolute;left:83px;top:516.55px;width:19.5px;height:19.5px;border:1.6px dashed #404040;background:#fff;"></div><div style="position:absolute;left:-885px;width:1200px;text-align:right;top:516.84px;height:23.79px;line-height:23.79px;font-size:18.3px;color:#202020;white-space:pre;transform:scale(0.815,1.0);transform-origin:right center;">02.12.2024</div><div style="position:absolute;left:332px;top:516.84px;height:23.79px;line-height:23.79px;font-size:18.3px;color:#202020;white-space:pre;transform:scale(0.865,1.0);transform-origin:left center;">Route north</div><div style="position:absolute;left:-585.4px;width:1200px;text-align:right;top:516.84px;height:23.79px;line-height:23.79px;font-size:18.3px;color:#202020;white-space:pre;transform:scale(0.84,1.0);transform-origin:right center;">1020</div><div style="position:absolute;left:631.5px;top:516.84px;height:23.79px;line-height:23.79px;font-size:18.3px;color:#202020;white-space:pre;transform:scale(0.866,1.0);transform-origin:left center;">Customer for DOP</div><div style="position:absolute;left:853.4px;top:516.84px;height:23.79px;line-height:23.79px;font-size:18.3px;color:#202020;white-space:pre;transform:scale(0.875,1.0);transform-origin:left center;">A+W Safe 6 mm</div><div style="position:absolute;left:230.70000000000005px;width:1200px;text-align:right;top:516.84px;height:23.79px;line-height:23.79px;font-size:18.3px;color:#202020;white-space:pre;transform:scale(0.84,1.0);transform-origin:right center;">2</div><div style="position:absolute;left:1447.7px;top:516.84px;height:23.79px;line-height:23.79px;font-size:18.3px;color:#202020;white-space:pre;transform:scale(0.9,1.0);transform-origin:left center;">&lt;n.e.&gt;</div><div style="position:absolute;left:506px;width:1200px;text-align:right;top:516.84px;height:23.79px;line-height:23.79px;font-size:18.3px;color:#202020;white-space:pre;transform:scale(0.84,1.0);transform-origin:right center;">0</div><div style="position:absolute;left:643px;width:1200px;text-align:right;top:516.84px;height:23.79px;line-height:23.79px;font-size:18.3px;color:#202020;white-space:pre;transform:scale(0.84,1.0);transform-origin:right center;">-</div><div style="position:absolute;left:781px;width:1200px;text-align:right;top:516.84px;height:23.79px;line-height:23.79px;font-size:18.3px;color:#202020;white-space:pre;transform:scale(0.84,1.0);transform-origin:right center;">-</div><div style="position:absolute;left:920px;width:1200px;text-align:right;top:516.84px;height:23.79px;line-height:23.79px;font-size:18.3px;color:#1a2a30;white-space:pre;transform:scale(0.84,1.0);transform-origin:right center;">4</div><div style="position:absolute;left:1057px;width:1200px;text-align:right;top:516.84px;height:23.79px;line-height:23.79px;font-size:18.3px;color:#202020;white-space:pre;transform:scale(0.84,1.0);transform-origin:right center;">-</div><div style="position:absolute;left:83px;top:542.7px;width:19.5px;height:19.5px;border:1.6px dashed #404040;background:#fff;"></div><div style="position:absolute;left:-885px;width:1200px;text-align:right;top:542.99px;height:23.79px;line-height:23.79px;font-size:18.3px;color:#202020;white-space:pre;transform:scale(0.815,1.0);transform-origin:right center;">02.12.2024</div><div style="position:absolute;left:332px;top:542.99px;height:23.79px;line-height:23.79px;font-size:18.3px;color:#202020;white-space:pre;transform:scale(0.865,1.0);transform-origin:left center;">Route north</div><div style="position:absolute;left:-585.4px;width:1200px;text-align:right;top:542.99px;height:23.79px;line-height:23.79px;font-size:18.3px;color:#202020;white-space:pre;transform:scale(0.84,1.0);transform-origin:right center;">1020</div><div style="position:absolute;left:631.5px;top:542.99px;height:23.79px;line-height:23.79px;font-size:18.3px;color:#202020;white-space:pre;transform:scale(0.866,1.0);transform-origin:left center;">Customer for DOP</div><div style="position:absolute;left:853.4px;top:542.99px;height:23.79px;line-height:23.79px;font-size:18.3px;color:#202020;white-space:pre;transform:scale(0.875,1.0);transform-origin:left center;">A+W Spacer 12 mm ALU</div><div style="position:absolute;left:230.70000000000005px;width:1200px;text-align:right;top:542.99px;height:23.79px;line-height:23.79px;font-size:18.3px;color:#202020;white-space:pre;transform:scale(0.84,1.0);transform-origin:right center;">2</div><div style="position:absolute;left:1447.7px;top:542.99px;height:23.79px;line-height:23.79px;font-size:18.3px;color:#202020;white-space:pre;transform:scale(0.9,1.0);transform-origin:left center;">&lt;n.e.&gt;</div><div style="position:absolute;left:506px;width:1200px;text-align:right;top:542.99px;height:23.79px;line-height:23.79px;font-size:18.3px;color:#202020;white-space:pre;transform:scale(0.84,1.0);transform-origin:right center;">0</div><div style="position:absolute;left:643px;width:1200px;text-align:right;top:542.99px;height:23.79px;line-height:23.79px;font-size:18.3px;color:#202020;white-space:pre;transform:scale(0.84,1.0);transform-origin:right center;">-</div><div style="position:absolute;left:781px;width:1200px;text-align:right;top:542.99px;height:23.79px;line-height:23.79px;font-size:18.3px;color:#202020;white-space:pre;transform:scale(0.84,1.0);transform-origin:right center;">-</div><div style="position:absolute;left:920px;width:1200px;text-align:right;top:542.99px;height:23.79px;line-height:23.79px;font-size:18.3px;color:#202020;white-space:pre;transform:scale(0.84,1.0);transform-origin:right center;">-</div><div style="position:absolute;left:1057px;width:1200px;text-align:right;top:542.99px;height:23.79px;line-height:23.79px;font-size:18.3px;color:#202020;white-space:pre;transform:scale(0.84,1.0);transform-origin:right center;">-</div><div style="position:absolute;left:1714.4px;top:567.15px;width:138.29999999999995px;height:26.15px;background:#00b3c9;"></div><div style="position:absolute;left:83px;top:568.85px;width:19.5px;height:19.5px;border:1.6px dashed #404040;background:#fff;"></div><div style="position:absolute;left:-885px;width:1200px;text-align:right;top:569.12px;height:23.79px;line-height:23.79px;font-size:18.3px;color:#202020;white-space:pre;transform:scale(0.815,1.0);transform-origin:right center;">02.12.2024</div><div style="position:absolute;left:332px;top:569.12px;height:23.79px;line-height:23.79px;font-size:18.3px;color:#202020;white-space:pre;transform:scale(0.865,1.0);transform-origin:left center;">Route north</div><div style="position:absolute;left:-585.4px;width:1200px;text-align:right;top:569.12px;height:23.79px;line-height:23.79px;font-size:18.3px;color:#202020;white-space:pre;transform:scale(0.84,1.0);transform-origin:right center;">1020</div><div style="position:absolute;left:631.5px;top:569.12px;height:23.79px;line-height:23.79px;font-size:18.3px;color:#202020;white-space:pre;transform:scale(0.866,1.0);transform-origin:left center;">Customer for DOP</div><div style="position:absolute;left:853.4px;top:569.12px;height:23.79px;line-height:23.79px;font-size:18.3px;color:#202020;white-space:pre;transform:scale(0.875,1.0);transform-origin:left center;">IG 4/12/Th4 A+W</div><div style="position:absolute;left:230.70000000000005px;width:1200px;text-align:right;top:569.12px;height:23.79px;line-height:23.79px;font-size:18.3px;color:#202020;white-space:pre;transform:scale(0.84,1.0);transform-origin:right center;">2</div><div style="position:absolute;left:1447.7px;top:569.12px;height:23.79px;line-height:23.79px;font-size:18.3px;color:#202020;white-space:pre;transform:scale(0.9,1.0);transform-origin:left center;">&lt;n.e.&gt;</div><div style="position:absolute;left:506px;width:1200px;text-align:right;top:569.12px;height:23.79px;line-height:23.79px;font-size:18.3px;color:#202020;white-space:pre;transform:scale(0.84,1.0);transform-origin:right center;">48</div><div style="position:absolute;left:643px;width:1200px;text-align:right;top:569.12px;height:23.79px;line-height:23.79px;font-size:18.3px;color:#1a2a30;white-space:pre;transform:scale(0.84,1.0);transform-origin:right center;">48</div><div style="position:absolute;left:781px;width:1200px;text-align:right;top:569.12px;height:23.79px;line-height:23.79px;font-size:18.3px;color:#202020;white-space:pre;transform:scale(0.84,1.0);transform-origin:right center;">-</div><div style="position:absolute;left:920px;width:1200px;text-align:right;top:569.12px;height:23.79px;line-height:23.79px;font-size:18.3px;color:#202020;white-space:pre;transform:scale(0.84,1.0);transform-origin:right center;">-</div><div style="position:absolute;left:1057px;width:1200px;text-align:right;top:569.12px;height:23.79px;line-height:23.79px;font-size:18.3px;color:#202020;white-space:pre;transform:scale(0.84,1.0);transform-origin:right center;">-</div><div style="position:absolute;left:83px;top:595.0px;width:19.5px;height:19.5px;border:1.6px dashed #404040;background:#fff;"></div><div style="position:absolute;left:117px;top:595.27px;height:23.79px;line-height:23.79px;font-size:18.3px;color:#202020;white-space:pre;transform:scale(0.84,1.0);transform-origin:left center;">2120040</div><div style="position:absolute;left:-885px;width:1200px;text-align:right;top:595.27px;height:23.79px;line-height:23.79px;font-size:18.3px;color:#202020;white-space:pre;transform:scale(0.815,1.0);transform-origin:right center;">16.10.2024</div><div style="position:absolute;left:332px;top:595.27px;height:23.79px;line-height:23.79px;font-size:18.3px;color:#202020;white-space:pre;transform:scale(0.865,1.0);transform-origin:left center;">Route north</div><div style="position:absolute;left:-585.4px;width:1200px;text-align:right;top:595.27px;height:23.79px;line-height:23.79px;font-size:18.3px;color:#202020;white-space:pre;transform:scale(0.84,1.0);transform-origin:right center;">1060</div><div style="position:absolute;left:631.5px;top:595.27px;height:23.79px;line-height:23.79px;font-size:18.3px;color:#202020;white-space:pre;transform:scale(0.866,1.0);transform-origin:left center;">IGU with Georgian Bars</div><div style="position:absolute;left:853.4px;top:595.27px;height:23.79px;line-height:23.79px;font-size:18.3px;color:#202020;white-space:pre;transform:scale(0.875,1.0);transform-origin:left center;">A+W Spacer 12 mm ALU</div><div style="position:absolute;left:230.70000000000005px;width:1200px;text-align:right;top:595.27px;height:23.79px;line-height:23.79px;font-size:18.3px;color:#202020;white-space:pre;transform:scale(0.84,1.0);transform-origin:right center;">2</div><div style="position:absolute;left:1447.7px;top:595.27px;height:23.79px;line-height:23.79px;font-size:18.3px;color:#202020;white-space:pre;transform:scale(0.9,1.0);transform-origin:left center;">&lt;n.e.&gt;</div><div style="position:absolute;left:506px;width:1200px;text-align:right;top:595.27px;height:23.79px;line-height:23.79px;font-size:18.3px;color:#202020;white-space:pre;transform:scale(0.84,1.0);transform-origin:right center;">0</div><div style="position:absolute;left:643px;width:1200px;text-align:right;top:595.27px;height:23.79px;line-height:23.79px;font-size:18.3px;color:#202020;white-space:pre;transform:scale(0.84,1.0);transform-origin:right center;">-</div><div style="position:absolute;left:781px;width:1200px;text-align:right;top:595.27px;height:23.79px;line-height:23.79px;font-size:18.3px;color:#202020;white-space:pre;transform:scale(0.84,1.0);transform-origin:right center;">-</div><div style="position:absolute;left:920px;width:1200px;text-align:right;top:595.27px;height:23.79px;line-height:23.79px;font-size:18.3px;color:#202020;white-space:pre;transform:scale(0.84,1.0);transform-origin:right center;">-</div><div style="position:absolute;left:1057px;width:1200px;text-align:right;top:595.27px;height:23.79px;line-height:23.79px;font-size:18.3px;color:#202020;white-space:pre;transform:scale(0.84,1.0);transform-origin:right center;">-</div><div style="position:absolute;left:1714.4px;top:619.45px;width:138.29999999999995px;height:26.15px;background:#00b3c9;"></div><div style="position:absolute;left:83px;top:621.15px;width:19.5px;height:19.5px;border:1.6px dashed #404040;background:#fff;"></div><div style="position:absolute;left:-885px;width:1200px;text-align:right;top:621.44px;height:23.79px;line-height:23.79px;font-size:18.3px;color:#202020;white-space:pre;transform:scale(0.815,1.0);transform-origin:right center;">16.10.2024</div><div style="position:absolute;left:332px;top:621.44px;height:23.79px;line-height:23.79px;font-size:18.3px;color:#202020;white-space:pre;transform:scale(0.865,1.0);transform-origin:left center;">Route north</div><div style="position:absolute;left:-585.4px;width:1200px;text-align:right;top:621.44px;height:23.79px;line-height:23.79px;font-size:18.3px;color:#202020;white-space:pre;transform:scale(0.84,1.0);transform-origin:right center;">1060</div><div style="position:absolute;left:631.5px;top:621.44px;height:23.79px;line-height:23.79px;font-size:18.3px;color:#202020;white-space:pre;transform:scale(0.866,1.0);transform-origin:left center;">IGU with Georgian Bars</div><div style="position:absolute;left:853.4px;top:621.44px;height:23.79px;line-height:23.79px;font-size:18.3px;color:#202020;white-space:pre;transform:scale(0.875,1.0);transform-origin:left center;">IG 4/12/Th4 A+W</div><div style="position:absolute;left:230.70000000000005px;width:1200px;text-align:right;top:621.44px;height:23.79px;line-height:23.79px;font-size:18.3px;color:#202020;white-space:pre;transform:scale(0.84,1.0);transform-origin:right center;">2</div><div style="position:absolute;left:1447.7px;top:621.44px;height:23.79px;line-height:23.79px;font-size:18.3px;color:#202020;white-space:pre;transform:scale(0.9,1.0);transform-origin:left center;">&lt;n.e.&gt;</div><div style="position:absolute;left:506px;width:1200px;text-align:right;top:621.44px;height:23.79px;line-height:23.79px;font-size:18.3px;color:#202020;white-space:pre;transform:scale(0.84,1.0);transform-origin:right center;">73</div><div style="position:absolute;left:643px;width:1200px;text-align:right;top:621.44px;height:23.79px;line-height:23.79px;font-size:18.3px;color:#1a2a30;white-space:pre;transform:scale(0.84,1.0);transform-origin:right center;">73</div><div style="position:absolute;left:781px;width:1200px;text-align:right;top:621.44px;height:23.79px;line-height:23.79px;font-size:18.3px;color:#202020;white-space:pre;transform:scale(0.84,1.0);transform-origin:right center;">-</div><div style="position:absolute;left:920px;width:1200px;text-align:right;top:621.44px;height:23.79px;line-height:23.79px;font-size:18.3px;color:#202020;white-space:pre;transform:scale(0.84,1.0);transform-origin:right center;">-</div><div style="position:absolute;left:1057px;width:1200px;text-align:right;top:621.44px;height:23.79px;line-height:23.79px;font-size:18.3px;color:#202020;white-space:pre;transform:scale(0.84,1.0);transform-origin:right center;">-</div><div style="position:absolute;left:1714.4px;top:645.6px;width:138.29999999999995px;height:26.15px;background:#00b3c9;"></div><div style="position:absolute;left:83px;top:647.3px;width:19.5px;height:19.5px;border:1.6px dashed #404040;background:#fff;"></div><div style="position:absolute;left:-885px;width:1200px;text-align:right;top:647.58px;height:23.79px;line-height:23.79px;font-size:18.3px;color:#202020;white-space:pre;transform:scale(0.815,1.0);transform-origin:right center;">16.10.2024</div><div style="position:absolute;left:332px;top:647.58px;height:23.79px;line-height:23.79px;font-size:18.3px;color:#202020;white-space:pre;transform:scale(0.865,1.0);transform-origin:left center;">Route north</div><div style="position:absolute;left:-585.4px;width:1200px;text-align:right;top:647.58px;height:23.79px;line-height:23.79px;font-size:18.3px;color:#202020;white-space:pre;transform:scale(0.84,1.0);transform-origin:right center;">1060</div><div style="position:absolute;left:631.5px;top:647.58px;height:23.79px;line-height:23.79px;font-size:18.3px;color:#202020;white-space:pre;transform:scale(0.866,1.0);transform-origin:left center;">IGU with Georgian Bars</div><div style="position:absolute;left:853.4px;top:647.58px;height:23.79px;line-height:23.79px;font-size:18.3px;color:#202020;white-space:pre;transform:scale(0.875,1.0);transform-origin:left center;">IG Th4/10/4/10/Th4 A+W</div><div style="position:absolute;left:230.70000000000005px;width:1200px;text-align:right;top:647.58px;height:23.79px;line-height:23.79px;font-size:18.3px;color:#202020;white-space:pre;transform:scale(0.84,1.0);transform-origin:right center;">2</div><div style="position:absolute;left:1447.7px;top:647.58px;height:23.79px;line-height:23.79px;font-size:18.3px;color:#202020;white-space:pre;transform:scale(0.9,1.0);transform-origin:left center;">&lt;n.e.&gt;</div><div style="position:absolute;left:506px;width:1200px;text-align:right;top:647.58px;height:23.79px;line-height:23.79px;font-size:18.3px;color:#202020;white-space:pre;transform:scale(0.84,1.0);transform-origin:right center;">150</div><div style="position:absolute;left:643px;width:1200px;text-align:right;top:647.58px;height:23.79px;line-height:23.79px;font-size:18.3px;color:#1a2a30;white-space:pre;transform:scale(0.84,1.0);transform-origin:right center;">150</div><div style="position:absolute;left:781px;width:1200px;text-align:right;top:647.58px;height:23.79px;line-height:23.79px;font-size:18.3px;color:#202020;white-space:pre;transform:scale(0.84,1.0);transform-origin:right center;">-</div><div style="position:absolute;left:920px;width:1200px;text-align:right;top:647.58px;height:23.79px;line-height:23.79px;font-size:18.3px;color:#202020;white-space:pre;transform:scale(0.84,1.0);transform-origin:right center;">-</div><div style="position:absolute;left:1057px;width:1200px;text-align:right;top:647.58px;height:23.79px;line-height:23.79px;font-size:18.3px;color:#202020;white-space:pre;transform:scale(0.84,1.0);transform-origin:right center;">-</div><div style="position:absolute;left:83px;top:673.45px;width:19.5px;height:19.5px;border:1.6px dashed #404040;background:#fff;"></div><div style="position:absolute;left:-885px;width:1200px;text-align:right;top:673.73px;height:23.79px;line-height:23.79px;font-size:18.3px;color:#202020;white-space:pre;transform:scale(0.815,1.0);transform-origin:right center;">16.10.2024</div><div style="position:absolute;left:332px;top:673.73px;height:23.79px;line-height:23.79px;font-size:18.3px;color:#202020;white-space:pre;transform:scale(0.865,1.0);transform-origin:left center;">Route north</div><div style="position:absolute;left:-585.4px;width:1200px;text-align:right;top:673.73px;height:23.79px;line-height:23.79px;font-size:18.3px;color:#202020;white-space:pre;transform:scale(0.84,1.0);transform-origin:right center;">1060</div><div style="position:absolute;left:631.5px;top:673.73px;height:23.79px;line-height:23.79px;font-size:18.3px;color:#202020;white-space:pre;transform:scale(0.866,1.0);transform-origin:left center;">IGU with Georgian Bars</div><div style="position:absolute;left:853.4px;top:673.73px;height:23.79px;line-height:23.79px;font-size:18.3px;color:#202020;white-space:pre;transform:scale(0.875,1.0);transform-origin:left center;">Spacer 18 mm ALU A+W</div><div style="position:absolute;left:230.70000000000005px;width:1200px;text-align:right;top:673.73px;height:23.79px;line-height:23.79px;font-size:18.3px;color:#202020;white-space:pre;transform:scale(0.84,1.0);transform-origin:right center;">2</div><div style="position:absolute;left:1447.7px;top:673.73px;height:23.79px;line-height:23.79px;font-size:18.3px;color:#202020;white-space:pre;transform:scale(0.9,1.0);transform-origin:left center;">&lt;n.e.&gt;</div><div style="position:absolute;left:506px;width:1200px;text-align:right;top:673.73px;height:23.79px;line-height:23.79px;font-size:18.3px;color:#202020;white-space:pre;transform:scale(0.84,1.0);transform-origin:right center;">0</div><div style="position:absolute;left:643px;width:1200px;text-align:right;top:673.73px;height:23.79px;line-height:23.79px;font-size:18.3px;color:#202020;white-space:pre;transform:scale(0.84,1.0);transform-origin:right center;">-</div><div style="position:absolute;left:781px;width:1200px;text-align:right;top:673.73px;height:23.79px;line-height:23.79px;font-size:18.3px;color:#202020;white-space:pre;transform:scale(0.84,1.0);transform-origin:right center;">-</div><div style="position:absolute;left:920px;width:1200px;text-align:right;top:673.73px;height:23.79px;line-height:23.79px;font-size:18.3px;color:#202020;white-space:pre;transform:scale(0.84,1.0);transform-origin:right center;">-</div><div style="position:absolute;left:1057px;width:1200px;text-align:right;top:673.73px;height:23.79px;line-height:23.79px;font-size:18.3px;color:#202020;white-space:pre;transform:scale(0.84,1.0);transform-origin:right center;">-</div><div style="position:absolute;left:81px;top:696px;width:2179px;height:21px;background:#f0f0f0;"></div><div style="position:absolute;left:104px;top:697px;width:1889px;height:19px;background:#cdcdcd;"></div><svg style="position:absolute;left:86px;top:699px;" width="14" height="16" viewBox="0 0 14 16"><path d="M10 3 L4 8 L10 13" stroke="#555" stroke-width="2.2" fill="none"/></svg><svg style="position:absolute;left:2240px;top:699px;" width="14" height="16" viewBox="0 0 14 16"><path d="M4 3 L10 8 L4 13" stroke="#555" stroke-width="2.2" fill="none"/></svg><div style="position:absolute;left:2260px;top:246px;width:23px;height:471px;background:#f0f0f0;"></div><div style="position:absolute;left:2262px;top:268px;width:19px;height:120px;background:#cdcdcd;"></div><svg style="position:absolute;left:2263px;top:251px;" width="16" height="14" viewBox="0 0 16 14"><path d="M3 10 L8 4 L13 10" stroke="#555" stroke-width="2.2" fill="none"/></svg><svg style="position:absolute;left:2263px;top:676px;" width="16" height="14" viewBox="0 0 16 14"><path d="M3 4 L8 10 L13 4" stroke="#555" stroke-width="2.2" fill="none"/></svg><div style="position:absolute;left:79px;top:724px;width:1725px;height:34px;background:#fff;border:1px solid #a8a8a8;border-top:2px solid #9a9a9a;"></div><div style="position:absolute;left:389px;top:726px;width:1px;height:31px;background:#e2e2e2;"></div><div style="position:absolute;left:698px;top:726px;width:1px;height:31px;background:#e2e2e2;"></div><div style="position:absolute;left:1006px;top:726px;width:1px;height:31px;background:#e2e2e2;"></div><div style="position:absolute;left:1315px;top:726px;width:1px;height:31px;background:#e2e2e2;"></div><div style="position:absolute;left:1624px;top:726px;width:1px;height:31px;background:#e2e2e2;"></div><div style="position:absolute;left:-366px;width:1200px;text-align:center;top:729.23px;height:22.75px;line-height:22.75px;font-size:17.5px;color:#2a2a2a;white-space:pre;transform:scale(0.86,1.0);transform-origin:center center;">Qty. Final Product: 0 / 1505</div><div style="position:absolute;left:-56.5px;width:1200px;text-align:center;top:729.23px;height:22.75px;line-height:22.75px;font-size:17.5px;color:#2a2a2a;white-space:pre;transform:scale(0.86,1.0);transform-origin:center center;">IG Pcs: 0 / 537</div><div style="position:absolute;left:252px;width:1200px;text-align:center;top:729.23px;height:22.75px;line-height:22.75px;font-size:17.5px;color:#2a2a2a;white-space:pre;transform:scale(0.86,1.0);transform-origin:center center;">Only Cutting: 0 / 769</div><div style="position:absolute;left:562px;width:1200px;text-align:center;top:729.23px;height:22.75px;line-height:22.75px;font-size:17.5px;color:#2a2a2a;white-space:pre;transform:scale(0.86,1.0);transform-origin:center center;">TG/HS Pcs Prod: 0 / 223</div><div style="position:absolute;left:870px;width:1200px;text-align:center;top:729.23px;height:22.75px;line-height:22.75px;font-size:17.5px;color:#2a2a2a;white-space:pre;transform:scale(0.86,1.0);transform-origin:center center;">LAMI Pcs Prod: 0 / 155</div><div style="position:absolute;left:80px;top:764px;width:1724px;height:31px;background:#e3e3e3;border:1px solid #b4b4b4;"></div><div style="position:absolute;left:81px;top:765px;width:31px;height:29px;background:#e8e8e8;"></div><svg style="position:absolute;left:81px;top:765px;" width="32" height="30" viewBox="0 0 32 30"><ellipse cx="15" cy="6" rx="12" ry="4" fill="#e0e0e0" stroke="#999"/><path d="M3 6 L12 18 L12 26 L18 26 L18 18 L27 6" fill="#c8c8c8" stroke="#888"/><circle cx="21" cy="22" r="6" fill="#3cb83c"/><path d="M21 18 V26 M17 22 H25" stroke="#fff" stroke-width="2.2"/></svg><div style="position:absolute;left:119px;top:768.55px;height:22.1px;line-height:22.1px;font-size:17px;color:#222;white-space:pre;transform:scale(0.84,1.0);transform-origin:left center;">unfiltered</div><svg style="position:absolute;left:1782px;top:772px;" width="18" height="14" viewBox="0 0 18 14"><path d="M3 4 L9 10 L15 4" stroke="#555" stroke-width="1.5" fill="none"/></svg><div style="position:absolute;left:1844px;top:725.7px;width:134px;height:68.6px;background:#e1e1e1;border:1px solid #adadad;"></div><div style="position:absolute;left:1311.0px;width:1200px;text-align:center;top:762.27px;height:21.45px;line-height:21.45px;font-size:16.5px;color:#222;white-space:pre;transform:scale(0.92,1.0);transform-origin:center center;">Batch (F6)</div><div style="position:absolute;left:1995.5px;top:725.7px;width:134.5px;height:68.6px;background:#e1e1e1;border:1px solid #adadad;"></div><div style="position:absolute;left:1462.75px;width:1200px;text-align:center;top:762.27px;height:21.45px;line-height:21.45px;font-size:16.5px;color:#222;white-space:pre;transform:scale(0.92,1.0);transform-origin:center center;">Glass types (F7)</div><div style="position:absolute;left:2147.4px;top:725.7px;width:135.0999999999999px;height:68.6px;background:#e1e1e1;border:1px solid #adadad;"></div><div style="position:absolute;left:1614.9499999999998px;width:1200px;text-align:center;top:762.27px;height:21.45px;line-height:21.45px;font-size:16.5px;color:#222;white-space:pre;transform:scale(0.92,1.0);transform-origin:center center;">Details (F8)</div><svg style="position:absolute;left:1896px;top:732px;" width="30" height="30" viewBox="0 0 30 30"><circle cx="15" cy="15" r="11.44" fill="none" stroke="#8080b8" stroke-width="5.30" stroke-dasharray="4.49 4.49"/><circle cx="15" cy="15" r="11.44" fill="none" stroke="#a9a9da" stroke-width="3.90" stroke-dasharray="4.49 4.49"/><circle cx="15" cy="15" r="9.36" fill="#a9a9da" stroke="#7a7ab4" stroke-width="1"/><circle cx="15" cy="15" r="3.90" fill="#f4f4fc" stroke="#8a8ac0" stroke-width="0.8"/></svg><svg style="position:absolute;left:2049px;top:732px;" width="30" height="30" viewBox="0 0 30 30"><rect x="6" y="6" width="20" height="20" fill="#cde0f4" stroke="#5a7aa8"/><rect x="9" y="2" width="17" height="8" fill="#8ab0e0" stroke="#4a6a98"/><rect x="4" y="12" width="4" height="14" fill="#6a8ab8"/></svg><svg style="position:absolute;left:2201px;top:732px;" width="30" height="30" viewBox="0 0 30 30"><circle cx="12" cy="12" r="9" fill="#cfe6fa" stroke="#4a8ac8" stroke-width="2"/><path d="M18 18 L27 27" stroke="#e08a30" stroke-width="4"/></svg><div style="position:absolute;left:62px;top:836px;width:1046px;height:697px;background:#dbe6f2;border-left:1px solid #aab8c8;border-right:1px solid #aab8c8;border-bottom:1px solid #aab8c8;"></div><div style="position:absolute;left:74px;top:836px;width:1026px;height:685px;background:#f0f0f0;border-left:2px solid #6e6e6e;border-right:1px solid #c8d4e0;border-bottom:1px solid #c8d4e0;"></div><div style="position:absolute;left:81.7px;top:843.3px;width:17px;height:17px;border:1.3px solid #333;border-radius:50%;background:#fff;"></div><div style="position:absolute;left:103.2px;top:841.12px;height:22.75px;line-height:22.75px;font-size:17.5px;color:#222;white-space:pre;transform:scale(0.8,1.0);transform-origin:left center;">Items</div><div style="position:absolute;left:208px;top:843.3px;width:17px;height:17px;border:1.3px solid #333;border-radius:50%;background:#fff;"></div><div style="position:absolute;left:229.5px;top:841.12px;height:22.75px;line-height:22.75px;font-size:17.5px;color:#222;white-space:pre;transform:scale(0.8,1.0);transform-origin:left center;">Parts</div><div style="position:absolute;left:337.4px;top:843.3px;width:17px;height:17px;border:1.3px solid #333;border-radius:50%;background:#fff;"></div><div style="position:absolute;left:358.9px;top:841.12px;height:22.75px;line-height:22.75px;font-size:17.5px;color:#222;white-space:pre;transform:scale(0.8,1.0);transform-origin:left center;">Processings</div><div style="position:absolute;left:342.4px;top:848.3px;width:7px;height:7px;background:#222;border-radius:50%;"></div><div style="position:absolute;left:552px;top:844px;width:17px;height:17px;border:1.3px solid #333;background:#fff;"></div><div style="position:absolute;left:574.8px;top:841.62px;height:22.75px;line-height:22.75px;font-size:17.5px;color:#222;white-space:pre;transform:scale(0.893,1.0);transform-origin:left center;">Display spacers, foils, and non-glass articles</div><div style="position:absolute;left:76px;top:869px;width:1021px;height:620px;background:#fff;border:3px solid #3a3a3a;border-right:2px solid #3a3a3a;"></div><div style="position:absolute;left:768px;top:872px;width:138px;height:26px;background:#cce4f7;"></div><div style="position:absolute;left:217px;top:872px;width:1px;height:26px;background:#e3e3e3;"></div><div style="position:absolute;left:354px;top:872px;width:1px;height:26px;background:#e3e3e3;"></div><div style="position:absolute;left:492px;top:872px;width:1px;height:26px;background:#e3e3e3;"></div><div style="position:absolute;left:630px;top:872px;width:1px;height:26px;background:#e3e3e3;"></div><div style="position:absolute;left:768px;top:872px;width:1px;height:26px;background:#e3e3e3;"></div><div style="position:absolute;left:906px;top:872px;width:1px;height:26px;background:#e3e3e3;"></div><div style="position:absolute;left:1044px;top:872px;width:1px;height:26px;background:#e3e3e3;"></div><div style="position:absolute;left:91px;top:874.62px;height:22.75px;line-height:22.75px;font-size:17.5px;color:#222;white-space:pre;transform:scale(0.8,1.0);transform-origin:left center;">Item</div><div style="position:absolute;left:227px;top:874.62px;height:22.75px;line-height:22.75px;font-size:17.5px;color:#222;white-space:pre;transform:scale(0.8,1.0);transform-origin:left center;">Name</div><div style="position:absolute;left:365px;top:874.62px;height:22.75px;line-height:22.75px;font-size:17.5px;color:#222;white-space:pre;transform:scale(0.8,1.0);transform-origin:left center;">Size</div><div style="position:absolute;left:501px;top:874.62px;height:22.75px;line-height:22.75px;font-size:17.5px;color:#222;white-space:pre;transform:scale(0.8,1.0);transform-origin:left center;">Quantity</div><div style="position:absolute;left:640.6px;top:874.62px;height:22.75px;line-height:22.75px;font-size:17.5px;color:#222;white-space:pre;transform:scale(0.8,1.0);transform-origin:left center;">Machine</div><div style="position:absolute;left:779px;top:874.62px;height:22.75px;line-height:22.75px;font-size:17.5px;color:#222;white-space:pre;transform:scale(0.8,1.0);transform-origin:left center;">Prod. date</div><div style="position:absolute;left:916.3px;top:874.62px;height:22.75px;line-height:22.75px;font-size:17.5px;color:#222;white-space:pre;transform:scale(0.8,1.0);transform-origin:left center;">Prod. quantity</div><div style="position:absolute;left:1054px;top:874.62px;height:22.75px;line-height:22.75px;font-size:17.5px;color:#222;white-space:pre;transform:scale(0.8,1.0);transform-origin:left center;">Batch</div><div style="position:absolute;left:79px;top:899.75px;width:1015px;height:22.06px;background:#93ec93;border-bottom:1px solid #88b8a0;"></div><div style="position:absolute;left:217px;top:899.75px;width:1px;height:22.06px;background:#8cb48c;"></div><div style="position:absolute;left:354px;top:899.75px;width:1px;height:22.06px;background:#8cb48c;"></div><div style="position:absolute;left:492px;top:899.75px;width:1px;height:22.06px;background:#8cb48c;"></div><div style="position:absolute;left:630px;top:899.75px;width:1px;height:22.06px;background:#8cb48c;"></div><div style="position:absolute;left:768px;top:899.75px;width:1px;height:22.06px;background:#8cb48c;"></div><div style="position:absolute;left:906px;top:899.75px;width:1px;height:22.06px;background:#8cb48c;"></div><div style="position:absolute;left:1044px;top:899.75px;width:1px;height:22.06px;background:#8cb48c;"></div><div style="position:absolute;left:83px;top:900.45px;height:23.4px;line-height:23.4px;font-size:18px;color:#1a1a1a;white-space:pre;transform:scale(0.79,1.0);transform-origin:left center;">1(1)</div><div style="position:absolute;left:224.4px;top:900.45px;height:23.4px;line-height:23.4px;font-size:18px;color:#4e9a4e;white-space:pre;transform:scale(0.9,1.0);transform-origin:left center;">Float 6 mm  A+W</div><div style="position:absolute;left:360px;top:900.45px;height:23.4px;line-height:23.4px;font-size:18px;color:#1a1a1a;white-space:pre;transform:scale(0.79,1.0);transform-origin:left center;">1294 mm x 894 mm</div><div style="position:absolute;left:497px;top:900.45px;height:23.4px;line-height:23.4px;font-size:18px;color:#1a1a1a;white-space:pre;transform:scale(0.79,1.0);transform-origin:left center;">7</div><div style="position:absolute;left:79px;top:921.81px;width:1015px;height:22.06px;background:#acd8e6;border-bottom:1px solid #8aa6b0;"></div><div style="position:absolute;left:217px;top:921.81px;width:1px;height:22.06px;background:#8aa6b0;"></div><div style="position:absolute;left:354px;top:921.81px;width:1px;height:22.06px;background:#8aa6b0;"></div><div style="position:absolute;left:492px;top:921.81px;width:1px;height:22.06px;background:#8aa6b0;"></div><div style="position:absolute;left:630px;top:921.81px;width:1px;height:22.06px;background:#8aa6b0;"></div><div style="position:absolute;left:768px;top:921.81px;width:1px;height:22.06px;background:#8aa6b0;"></div><div style="position:absolute;left:906px;top:921.81px;width:1px;height:22.06px;background:#8aa6b0;"></div><div style="position:absolute;left:1044px;top:921.81px;width:1px;height:22.06px;background:#8aa6b0;"></div><div style="position:absolute;left:235px;top:921.81px;width:1px;height:22.06px;border-left:1px dotted #333;"></div><div style="position:absolute;left:236px;top:934.21px;width:14px;height:1px;border-top:1px dotted #333;"></div><div style="position:absolute;left:250.6px;top:922.51px;height:23.4px;line-height:23.4px;font-size:18px;color:#1a1a1a;white-space:pre;transform:scale(0.79,1.0);transform-origin:left center;">Packing</div><div style="position:absolute;left:636px;top:922.51px;height:23.4px;line-height:23.4px;font-size:18px;color:#1a1a1a;white-space:pre;transform:scale(0.79,1.0);transform-origin:left center;">3000 / Delivery /...</div><div style="position:absolute;left:773.5px;top:922.51px;height:23.4px;line-height:23.4px;font-size:18px;color:#1a1a1a;white-space:pre;transform:scale(0.79,1.0);transform-origin:left center;">23.07.24</div><div style="position:absolute;left:911.6px;top:922.51px;height:23.4px;line-height:23.4px;font-size:18px;color:#1a1a1a;white-space:pre;transform:scale(0.79,1.0);transform-origin:left center;">0</div><div style="position:absolute;left:79px;top:943.87px;width:1015px;height:22.06px;background:#acd8e6;border-bottom:1px solid #8aa6b0;"></div><div style="position:absolute;left:217px;top:943.87px;width:1px;height:22.06px;background:#8aa6b0;"></div><div style="position:absolute;left:354px;top:943.87px;width:1px;height:22.06px;background:#8aa6b0;"></div><div style="position:absolute;left:492px;top:943.87px;width:1px;height:22.06px;background:#8aa6b0;"></div><div style="position:absolute;left:630px;top:943.87px;width:1px;height:22.06px;background:#8aa6b0;"></div><div style="position:absolute;left:768px;top:943.87px;width:1px;height:22.06px;background:#8aa6b0;"></div><div style="position:absolute;left:906px;top:943.87px;width:1px;height:22.06px;background:#8aa6b0;"></div><div style="position:absolute;left:1044px;top:943.87px;width:1px;height:22.06px;background:#8aa6b0;"></div><div style="position:absolute;left:235px;top:943.87px;width:1px;height:22.06px;border-left:1px dotted #333;"></div><div style="position:absolute;left:236px;top:956.27px;width:14px;height:1px;border-top:1px dotted #333;"></div><div style="position:absolute;left:250.6px;top:944.57px;height:23.4px;line-height:23.4px;font-size:18px;color:#1a1a1a;white-space:pre;transform:scale(0.79,1.0);transform-origin:left center;">Packing</div><div style="position:absolute;left:636px;top:944.57px;height:23.4px;line-height:23.4px;font-size:18px;color:#1a1a1a;white-space:pre;transform:scale(0.79,1.0);transform-origin:left center;">2910 / Packing /...</div><div style="position:absolute;left:773.5px;top:944.57px;height:23.4px;line-height:23.4px;font-size:18px;color:#1a1a1a;white-space:pre;transform:scale(0.79,1.0);transform-origin:left center;">18.07.24</div><div style="position:absolute;left:911.6px;top:944.57px;height:23.4px;line-height:23.4px;font-size:18px;color:#1a1a1a;white-space:pre;transform:scale(0.79,1.0);transform-origin:left center;">0</div><div style="position:absolute;left:79px;top:965.93px;width:1015px;height:22.06px;background:#acd8e6;border-bottom:1px solid #8aa6b0;"></div><div style="position:absolute;left:217px;top:965.93px;width:1px;height:22.06px;background:#8aa6b0;"></div><div style="position:absolute;left:354px;top:965.93px;width:1px;height:22.06px;background:#8aa6b0;"></div><div style="position:absolute;left:492px;top:965.93px;width:1px;height:22.06px;background:#8aa6b0;"></div><div style="position:absolute;left:630px;top:965.93px;width:1px;height:22.06px;background:#8aa6b0;"></div><div style="position:absolute;left:768px;top:965.93px;width:1px;height:22.06px;background:#8aa6b0;"></div><div style="position:absolute;left:906px;top:965.93px;width:1px;height:22.06px;background:#8aa6b0;"></div><div style="position:absolute;left:1044px;top:965.93px;width:1px;height:22.06px;background:#8aa6b0;"></div><div style="position:absolute;left:235px;top:965.93px;width:1px;height:12.4px;border-left:1px dotted #333;"></div><div style="position:absolute;left:236px;top:978.33px;width:14px;height:1px;border-top:1px dotted #333;"></div><div style="position:absolute;left:250.6px;top:966.63px;height:23.4px;line-height:23.4px;font-size:18px;color:#1a1a1a;white-space:pre;transform:scale(0.79,1.0);transform-origin:left center;">Zuschnitt</div><div style="position:absolute;left:636px;top:966.63px;height:23.4px;line-height:23.4px;font-size:18px;color:#1a1a1a;white-space:pre;transform:scale(0.79,1.0);transform-origin:left center;">110 / Cutting Ta...</div><div style="position:absolute;left:773.5px;top:966.63px;height:23.4px;line-height:23.4px;font-size:18px;color:#1a1a1a;white-space:pre;transform:scale(0.79,1.0);transform-origin:left center;">17.07.24</div><div style="position:absolute;left:911.6px;top:966.63px;height:23.4px;line-height:23.4px;font-size:18px;color:#1a1a1a;white-space:pre;transform:scale(0.79,1.0);transform-origin:left center;">0</div><div style="position:absolute;left:79px;top:987.99px;width:1015px;height:22.06px;background:#93ec93;border-bottom:1px solid #88b8a0;"></div><div style="position:absolute;left:217px;top:987.99px;width:1px;height:22.06px;background:#8cb48c;"></div><div style="position:absolute;left:354px;top:987.99px;width:1px;height:22.06px;background:#8cb48c;"></div><div style="position:absolute;left:492px;top:987.99px;width:1px;height:22.06px;background:#8cb48c;"></div><div style="position:absolute;left:630px;top:987.99px;width:1px;height:22.06px;background:#8cb48c;"></div><div style="position:absolute;left:768px;top:987.99px;width:1px;height:22.06px;background:#8cb48c;"></div><div style="position:absolute;left:906px;top:987.99px;width:1px;height:22.06px;background:#8cb48c;"></div><div style="position:absolute;left:1044px;top:987.99px;width:1px;height:22.06px;background:#8cb48c;"></div><div style="position:absolute;left:83px;top:988.69px;height:23.4px;line-height:23.4px;font-size:18px;color:#1a1a1a;white-space:pre;transform:scale(0.79,1.0);transform-origin:left center;">2(2)</div><div style="position:absolute;left:224.4px;top:988.69px;height:23.4px;line-height:23.4px;font-size:18px;color:#4e9a4e;white-space:pre;transform:scale(0.9,1.0);transform-origin:left center;">Float 6 mm  A+W</div><div style="position:absolute;left:360px;top:988.69px;height:23.4px;line-height:23.4px;font-size:18px;color:#1a1a1a;white-space:pre;transform:scale(0.79,1.0);transform-origin:left center;">804 mm x 1274 mm</div><div style="position:absolute;left:497px;top:988.69px;height:23.4px;line-height:23.4px;font-size:18px;color:#1a1a1a;white-space:pre;transform:scale(0.79,1.0);transform-origin:left center;">2</div><div style="position:absolute;left:79px;top:1010.05px;width:1015px;height:22.06px;background:#acd8e6;border-bottom:1px solid #8aa6b0;"></div><div style="position:absolute;left:217px;top:1010.05px;width:1px;height:22.06px;background:#8aa6b0;"></div><div style="position:absolute;left:354px;top:1010.05px;width:1px;height:22.06px;background:#8aa6b0;"></div><div style="position:absolute;left:492px;top:1010.05px;width:1px;height:22.06px;background:#8aa6b0;"></div><div style="position:absolute;left:630px;top:1010.05px;width:1px;height:22.06px;background:#8aa6b0;"></div><div style="position:absolute;left:768px;top:1010.05px;width:1px;height:22.06px;background:#8aa6b0;"></div><div style="position:absolute;left:906px;top:1010.05px;width:1px;height:22.06px;background:#8aa6b0;"></div><div style="position:absolute;left:1044px;top:1010.05px;width:1px;height:22.06px;background:#8aa6b0;"></div><div style="position:absolute;left:235px;top:1010.05px;width:1px;height:22.06px;border-left:1px dotted #333;"></div><div style="position:absolute;left:236px;top:1022.45px;width:14px;height:1px;border-top:1px dotted #333;"></div><div style="position:absolute;left:250.6px;top:1010.75px;height:23.4px;line-height:23.4px;font-size:18px;color:#1a1a1a;white-space:pre;transform:scale(0.79,1.0);transform-origin:left center;">Packing</div><div style="position:absolute;left:636px;top:1010.75px;height:23.4px;line-height:23.4px;font-size:18px;color:#1a1a1a;white-space:pre;transform:scale(0.79,1.0);transform-origin:left center;">3000 / Delivery /...</div><div style="position:absolute;left:773.5px;top:1010.75px;height:23.4px;line-height:23.4px;font-size:18px;color:#1a1a1a;white-space:pre;transform:scale(0.79,1.0);transform-origin:left center;">23.07.24</div><div style="position:absolute;left:911.6px;top:1010.75px;height:23.4px;line-height:23.4px;font-size:18px;color:#1a1a1a;white-space:pre;transform:scale(0.79,1.0);transform-origin:left center;">0</div><div style="position:absolute;left:79px;top:1032.11px;width:1015px;height:22.06px;background:#acd8e6;border-bottom:1px solid #8aa6b0;"></div><div style="position:absolute;left:217px;top:1032.11px;width:1px;height:22.06px;background:#8aa6b0;"></div><div style="position:absolute;left:354px;top:1032.11px;width:1px;height:22.06px;background:#8aa6b0;"></div><div style="position:absolute;left:492px;top:1032.11px;width:1px;height:22.06px;background:#8aa6b0;"></div><div style="position:absolute;left:630px;top:1032.11px;width:1px;height:22.06px;background:#8aa6b0;"></div><div style="position:absolute;left:768px;top:1032.11px;width:1px;height:22.06px;background:#8aa6b0;"></div><div style="position:absolute;left:906px;top:1032.11px;width:1px;height:22.06px;background:#8aa6b0;"></div><div style="position:absolute;left:1044px;top:1032.11px;width:1px;height:22.06px;background:#8aa6b0;"></div><div style="position:absolute;left:235px;top:1032.11px;width:1px;height:22.06px;border-left:1px dotted #333;"></div><div style="position:absolute;left:236px;top:1044.51px;width:14px;height:1px;border-top:1px dotted #333;"></div><div style="position:absolute;left:250.6px;top:1032.81px;height:23.4px;line-height:23.4px;font-size:18px;color:#1a1a1a;white-space:pre;transform:scale(0.79,1.0);transform-origin:left center;">Packing</div><div style="position:absolute;left:636px;top:1032.81px;height:23.4px;line-height:23.4px;font-size:18px;color:#1a1a1a;white-space:pre;transform:scale(0.79,1.0);transform-origin:left center;">2910 / Packing /...</div><div style="position:absolute;left:773.5px;top:1032.81px;height:23.4px;line-height:23.4px;font-size:18px;color:#1a1a1a;white-space:pre;transform:scale(0.79,1.0);transform-origin:left center;">22.07.24</div><div style="position:absolute;left:911.6px;top:1032.81px;height:23.4px;line-height:23.4px;font-size:18px;color:#1a1a1a;white-space:pre;transform:scale(0.79,1.0);transform-origin:left center;">0</div><div style="position:absolute;left:79px;top:1054.17px;width:1015px;height:22.06px;background:#acd8e6;border-bottom:1px solid #8aa6b0;"></div><div style="position:absolute;left:217px;top:1054.17px;width:1px;height:22.06px;background:#8aa6b0;"></div><div style="position:absolute;left:354px;top:1054.17px;width:1px;height:22.06px;background:#8aa6b0;"></div><div style="position:absolute;left:492px;top:1054.17px;width:1px;height:22.06px;background:#8aa6b0;"></div><div style="position:absolute;left:630px;top:1054.17px;width:1px;height:22.06px;background:#8aa6b0;"></div><div style="position:absolute;left:768px;top:1054.17px;width:1px;height:22.06px;background:#8aa6b0;"></div><div style="position:absolute;left:906px;top:1054.17px;width:1px;height:22.06px;background:#8aa6b0;"></div><div style="position:absolute;left:1044px;top:1054.17px;width:1px;height:22.06px;background:#8aa6b0;"></div><div style="position:absolute;left:235px;top:1054.17px;width:1px;height:12.4px;border-left:1px dotted #333;"></div><div style="position:absolute;left:236px;top:1066.57px;width:14px;height:1px;border-top:1px dotted #333;"></div><div style="position:absolute;left:250.6px;top:1054.87px;height:23.4px;line-height:23.4px;font-size:18px;color:#1a1a1a;white-space:pre;transform:scale(0.79,1.0);transform-origin:left center;">Zuschnitt</div><div style="position:absolute;left:636px;top:1054.87px;height:23.4px;line-height:23.4px;font-size:18px;color:#1a1a1a;white-space:pre;transform:scale(0.79,1.0);transform-origin:left center;">110 / Cutting Ta...</div><div style="position:absolute;left:773.5px;top:1054.87px;height:23.4px;line-height:23.4px;font-size:18px;color:#1a1a1a;white-space:pre;transform:scale(0.79,1.0);transform-origin:left center;">19.07.24</div><div style="position:absolute;left:911.6px;top:1054.87px;height:23.4px;line-height:23.4px;font-size:18px;color:#1a1a1a;white-space:pre;transform:scale(0.79,1.0);transform-origin:left center;">0</div><div style="position:absolute;left:79px;top:1076.23px;width:1015px;height:22.06px;background:#93ec93;border-bottom:1px solid #88b8a0;"></div><div style="position:absolute;left:217px;top:1076.23px;width:1px;height:22.06px;background:#8cb48c;"></div><div style="position:absolute;left:354px;top:1076.23px;width:1px;height:22.06px;background:#8cb48c;"></div><div style="position:absolute;left:492px;top:1076.23px;width:1px;height:22.06px;background:#8cb48c;"></div><div style="position:absolute;left:630px;top:1076.23px;width:1px;height:22.06px;background:#8cb48c;"></div><div style="position:absolute;left:768px;top:1076.23px;width:1px;height:22.06px;background:#8cb48c;"></div><div style="position:absolute;left:906px;top:1076.23px;width:1px;height:22.06px;background:#8cb48c;"></div><div style="position:absolute;left:1044px;top:1076.23px;width:1px;height:22.06px;background:#8cb48c;"></div><div style="position:absolute;left:83px;top:1076.93px;height:23.4px;line-height:23.4px;font-size:18px;color:#1a1a1a;white-space:pre;transform:scale(0.79,1.0);transform-origin:left center;">3(3)</div><div style="position:absolute;left:224.4px;top:1076.93px;height:23.4px;line-height:23.4px;font-size:18px;color:#4e9a4e;white-space:pre;transform:scale(0.9,1.0);transform-origin:left center;">Float 6 mm  A+W</div><div style="position:absolute;left:360px;top:1076.93px;height:23.4px;line-height:23.4px;font-size:18px;color:#1a1a1a;white-space:pre;transform:scale(0.79,1.0);transform-origin:left center;">780 mm x 350 mm</div><div style="position:absolute;left:497px;top:1076.93px;height:23.4px;line-height:23.4px;font-size:18px;color:#1a1a1a;white-space:pre;transform:scale(0.79,1.0);transform-origin:left center;">6</div><div style="position:absolute;left:79px;top:1098.29px;width:1015px;height:22.06px;background:#acd8e6;border-bottom:1px solid #8aa6b0;"></div><div style="position:absolute;left:217px;top:1098.29px;width:1px;height:22.06px;background:#8aa6b0;"></div><div style="position:absolute;left:354px;top:1098.29px;width:1px;height:22.06px;background:#8aa6b0;"></div><div style="position:absolute;left:492px;top:1098.29px;width:1px;height:22.06px;background:#8aa6b0;"></div><div style="position:absolute;left:630px;top:1098.29px;width:1px;height:22.06px;background:#8aa6b0;"></div><div style="position:absolute;left:768px;top:1098.29px;width:1px;height:22.06px;background:#8aa6b0;"></div><div style="position:absolute;left:906px;top:1098.29px;width:1px;height:22.06px;background:#8aa6b0;"></div><div style="position:absolute;left:1044px;top:1098.29px;width:1px;height:22.06px;background:#8aa6b0;"></div><div style="position:absolute;left:235px;top:1098.29px;width:1px;height:22.06px;border-left:1px dotted #333;"></div><div style="position:absolute;left:236px;top:1110.69px;width:14px;height:1px;border-top:1px dotted #333;"></div><div style="position:absolute;left:250.6px;top:1098.99px;height:23.4px;line-height:23.4px;font-size:18px;color:#1a1a1a;white-space:pre;transform:scale(0.79,1.0);transform-origin:left center;">Packing</div><div style="position:absolute;left:636px;top:1098.99px;height:23.4px;line-height:23.4px;font-size:18px;color:#1a1a1a;white-space:pre;transform:scale(0.79,1.0);transform-origin:left center;">3000 / Delivery /...</div><div style="position:absolute;left:773.5px;top:1098.99px;height:23.4px;line-height:23.4px;font-size:18px;color:#1a1a1a;white-space:pre;transform:scale(0.79,1.0);transform-origin:left center;">23.07.24</div><div style="position:absolute;left:911.6px;top:1098.99px;height:23.4px;line-height:23.4px;font-size:18px;color:#1a1a1a;white-space:pre;transform:scale(0.79,1.0);transform-origin:left center;">0</div><div style="position:absolute;left:79px;top:1120.35px;width:1015px;height:22.06px;background:#acd8e6;border-bottom:1px solid #8aa6b0;"></div><div style="position:absolute;left:217px;top:1120.35px;width:1px;height:22.06px;background:#8aa6b0;"></div><div style="position:absolute;left:354px;top:1120.35px;width:1px;height:22.06px;background:#8aa6b0;"></div><div style="position:absolute;left:492px;top:1120.35px;width:1px;height:22.06px;background:#8aa6b0;"></div><div style="position:absolute;left:630px;top:1120.35px;width:1px;height:22.06px;background:#8aa6b0;"></div><div style="position:absolute;left:768px;top:1120.35px;width:1px;height:22.06px;background:#8aa6b0;"></div><div style="position:absolute;left:906px;top:1120.35px;width:1px;height:22.06px;background:#8aa6b0;"></div><div style="position:absolute;left:1044px;top:1120.35px;width:1px;height:22.06px;background:#8aa6b0;"></div><div style="position:absolute;left:235px;top:1120.35px;width:1px;height:22.06px;border-left:1px dotted #333;"></div><div style="position:absolute;left:236px;top:1132.75px;width:14px;height:1px;border-top:1px dotted #333;"></div><div style="position:absolute;left:250.6px;top:1121.05px;height:23.4px;line-height:23.4px;font-size:18px;color:#1a1a1a;white-space:pre;transform:scale(0.79,1.0);transform-origin:left center;">Packing</div><div style="position:absolute;left:636px;top:1121.05px;height:23.4px;line-height:23.4px;font-size:18px;color:#1a1a1a;white-space:pre;transform:scale(0.79,1.0);transform-origin:left center;">2910 / Packing /...</div><div style="position:absolute;left:773.5px;top:1121.05px;height:23.4px;line-height:23.4px;font-size:18px;color:#1a1a1a;white-space:pre;transform:scale(0.79,1.0);transform-origin:left center;">19.07.24</div><div style="position:absolute;left:911.6px;top:1121.05px;height:23.4px;line-height:23.4px;font-size:18px;color:#1a1a1a;white-space:pre;transform:scale(0.79,1.0);transform-origin:left center;">0</div><div style="position:absolute;left:79px;top:1142.41px;width:1015px;height:22.06px;background:#acd8e6;border-bottom:1px solid #8aa6b0;"></div><div style="position:absolute;left:217px;top:1142.41px;width:1px;height:22.06px;background:#8aa6b0;"></div><div style="position:absolute;left:354px;top:1142.41px;width:1px;height:22.06px;background:#8aa6b0;"></div><div style="position:absolute;left:492px;top:1142.41px;width:1px;height:22.06px;background:#8aa6b0;"></div><div style="position:absolute;left:630px;top:1142.41px;width:1px;height:22.06px;background:#8aa6b0;"></div><div style="position:absolute;left:768px;top:1142.41px;width:1px;height:22.06px;background:#8aa6b0;"></div><div style="position:absolute;left:906px;top:1142.41px;width:1px;height:22.06px;background:#8aa6b0;"></div><div style="position:absolute;left:1044px;top:1142.41px;width:1px;height:22.06px;background:#8aa6b0;"></div><div style="position:absolute;left:235px;top:1142.41px;width:1px;height:12.4px;border-left:1px dotted #333;"></div><div style="position:absolute;left:236px;top:1154.81px;width:14px;height:1px;border-top:1px dotted #333;"></div><div style="position:absolute;left:250.6px;top:1143.11px;height:23.4px;line-height:23.4px;font-size:18px;color:#1a1a1a;white-space:pre;transform:scale(0.79,1.0);transform-origin:left center;">Zuschnitt</div><div style="position:absolute;left:636px;top:1143.11px;height:23.4px;line-height:23.4px;font-size:18px;color:#1a1a1a;white-space:pre;transform:scale(0.79,1.0);transform-origin:left center;">110 / Cutting Ta...</div><div style="position:absolute;left:773.5px;top:1143.11px;height:23.4px;line-height:23.4px;font-size:18px;color:#1a1a1a;white-space:pre;transform:scale(0.79,1.0);transform-origin:left center;">18.07.24</div><div style="position:absolute;left:911.6px;top:1143.11px;height:23.4px;line-height:23.4px;font-size:18px;color:#1a1a1a;white-space:pre;transform:scale(0.79,1.0);transform-origin:left center;">0</div><div style="position:absolute;left:79px;top:1164.47px;width:1015px;height:22.06px;background:#93ec93;border-bottom:1px solid #88b8a0;"></div><div style="position:absolute;left:217px;top:1164.47px;width:1px;height:22.06px;background:#8cb48c;"></div><div style="position:absolute;left:354px;top:1164.47px;width:1px;height:22.06px;background:#8cb48c;"></div><div style="position:absolute;left:492px;top:1164.47px;width:1px;height:22.06px;background:#8cb48c;"></div><div style="position:absolute;left:630px;top:1164.47px;width:1px;height:22.06px;background:#8cb48c;"></div><div style="position:absolute;left:768px;top:1164.47px;width:1px;height:22.06px;background:#8cb48c;"></div><div style="position:absolute;left:906px;top:1164.47px;width:1px;height:22.06px;background:#8cb48c;"></div><div style="position:absolute;left:1044px;top:1164.47px;width:1px;height:22.06px;background:#8cb48c;"></div><div style="position:absolute;left:83px;top:1165.17px;height:23.4px;line-height:23.4px;font-size:18px;color:#1a1a1a;white-space:pre;transform:scale(0.79,1.0);transform-origin:left center;">4(4)</div><div style="position:absolute;left:224.4px;top:1165.17px;height:23.4px;line-height:23.4px;font-size:18px;color:#4e9a4e;white-space:pre;transform:scale(0.9,1.0);transform-origin:left center;">Float 6 mm  A+W</div><div style="position:absolute;left:360px;top:1165.17px;height:23.4px;line-height:23.4px;font-size:18px;color:#1a1a1a;white-space:pre;transform:scale(0.79,1.0);transform-origin:left center;">400 mm x 200 mm</div><div style="position:absolute;left:497px;top:1165.17px;height:23.4px;line-height:23.4px;font-size:18px;color:#1a1a1a;white-space:pre;transform:scale(0.79,1.0);transform-origin:left center;">8</div><div style="position:absolute;left:79px;top:1186.53px;width:1015px;height:22.06px;background:#acd8e6;border-bottom:1px solid #8aa6b0;"></div><div style="position:absolute;left:79px;top:1186.53px;width:138px;height:21.06px;background:#0a78d6;"></div><div style="position:absolute;left:354px;top:1186.53px;width:740px;height:21.06px;background:#0a78d6;"></div><div style="position:absolute;left:217px;top:1186.53px;width:1px;height:22.06px;background:#8aa6b0;"></div><div style="position:absolute;left:354px;top:1186.53px;width:1px;height:22.06px;background:#8aa6b0;"></div><div style="position:absolute;left:492px;top:1186.53px;width:1px;height:22.06px;background:#8aa6b0;"></div><div style="position:absolute;left:630px;top:1186.53px;width:1px;height:22.06px;background:#8aa6b0;"></div><div style="position:absolute;left:768px;top:1186.53px;width:1px;height:22.06px;background:#8aa6b0;"></div><div style="position:absolute;left:906px;top:1186.53px;width:1px;height:22.06px;background:#8aa6b0;"></div><div style="position:absolute;left:1044px;top:1186.53px;width:1px;height:22.06px;background:#8aa6b0;"></div><div style="position:absolute;left:235px;top:1186.53px;width:1px;height:22.06px;border-left:1px dotted #333;"></div><div style="position:absolute;left:236px;top:1198.93px;width:14px;height:1px;border-top:1px dotted #333;"></div><div style="position:absolute;left:250.6px;top:1187.23px;height:23.4px;line-height:23.4px;font-size:18px;color:#1a1a1a;white-space:pre;transform:scale(0.79,1.0);transform-origin:left center;">Packing</div><div style="position:absolute;left:636px;top:1187.23px;height:23.4px;line-height:23.4px;font-size:18px;color:#ffffff;white-space:pre;transform:scale(0.79,1.0);transform-origin:left center;">3000 / Delivery /...</div><div style="position:absolute;left:773.5px;top:1187.23px;height:23.4px;line-height:23.4px;font-size:18px;color:#ffffff;white-space:pre;transform:scale(0.79,1.0);transform-origin:left center;">23.07.24</div><div style="position:absolute;left:911.6px;top:1187.23px;height:23.4px;line-height:23.4px;font-size:18px;color:#ffffff;white-space:pre;transform:scale(0.79,1.0);transform-origin:left center;">0</div><div style="position:absolute;left:79px;top:1208.59px;width:1015px;height:22.06px;background:#acd8e6;border-bottom:1px solid #8aa6b0;"></div><div style="position:absolute;left:217px;top:1208.59px;width:1px;height:22.06px;background:#8aa6b0;"></div><div style="position:absolute;left:354px;top:1208.59px;width:1px;height:22.06px;background:#8aa6b0;"></div><div style="position:absolute;left:492px;top:1208.59px;width:1px;height:22.06px;background:#8aa6b0;"></div><div style="position:absolute;left:630px;top:1208.59px;width:1px;height:22.06px;background:#8aa6b0;"></div><div style="position:absolute;left:768px;top:1208.59px;width:1px;height:22.06px;background:#8aa6b0;"></div><div style="position:absolute;left:906px;top:1208.59px;width:1px;height:22.06px;background:#8aa6b0;"></div><div style="position:absolute;left:1044px;top:1208.59px;width:1px;height:22.06px;background:#8aa6b0;"></div><div style="position:absolute;left:235px;top:1208.59px;width:1px;height:22.06px;border-left:1px dotted #333;"></div><div style="position:absolute;left:236px;top:1220.99px;width:14px;height:1px;border-top:1px dotted #333;"></div><div style="position:absolute;left:250.6px;top:1209.29px;height:23.4px;line-height:23.4px;font-size:18px;color:#1a1a1a;white-space:pre;transform:scale(0.79,1.0);transform-origin:left center;">Packing</div><div style="position:absolute;left:636px;top:1209.29px;height:23.4px;line-height:23.4px;font-size:18px;color:#1a1a1a;white-space:pre;transform:scale(0.79,1.0);transform-origin:left center;">2910 / Packing /...</div><div style="position:absolute;left:773.5px;top:1209.29px;height:23.4px;line-height:23.4px;font-size:18px;color:#1a1a1a;white-space:pre;transform:scale(0.79,1.0);transform-origin:left center;">18.07.24</div><div style="position:absolute;left:911.6px;top:1209.29px;height:23.4px;line-height:23.4px;font-size:18px;color:#1a1a1a;white-space:pre;transform:scale(0.79,1.0);transform-origin:left center;">0</div><div style="position:absolute;left:79px;top:1230.65px;width:1015px;height:22.06px;background:#acd8e6;border-bottom:1px solid #8aa6b0;"></div><div style="position:absolute;left:217px;top:1230.65px;width:1px;height:22.06px;background:#8aa6b0;"></div><div style="position:absolute;left:354px;top:1230.65px;width:1px;height:22.06px;background:#8aa6b0;"></div><div style="position:absolute;left:492px;top:1230.65px;width:1px;height:22.06px;background:#8aa6b0;"></div><div style="position:absolute;left:630px;top:1230.65px;width:1px;height:22.06px;background:#8aa6b0;"></div><div style="position:absolute;left:768px;top:1230.65px;width:1px;height:22.06px;background:#8aa6b0;"></div><div style="position:absolute;left:906px;top:1230.65px;width:1px;height:22.06px;background:#8aa6b0;"></div><div style="position:absolute;left:1044px;top:1230.65px;width:1px;height:22.06px;background:#8aa6b0;"></div><div style="position:absolute;left:235px;top:1230.65px;width:1px;height:12.4px;border-left:1px dotted #333;"></div><div style="position:absolute;left:236px;top:1243.05px;width:14px;height:1px;border-top:1px dotted #333;"></div><div style="position:absolute;left:250.6px;top:1231.35px;height:23.4px;line-height:23.4px;font-size:18px;color:#1a1a1a;white-space:pre;transform:scale(0.79,1.0);transform-origin:left center;">Zuschnitt</div><div style="position:absolute;left:636px;top:1231.35px;height:23.4px;line-height:23.4px;font-size:18px;color:#1a1a1a;white-space:pre;transform:scale(0.79,1.0);transform-origin:left center;">110 / Cutting Ta...</div><div style="position:absolute;left:773.5px;top:1231.35px;height:23.4px;line-height:23.4px;font-size:18px;color:#1a1a1a;white-space:pre;transform:scale(0.79,1.0);transform-origin:left center;">17.07.24</div><div style="position:absolute;left:911.6px;top:1231.35px;height:23.4px;line-height:23.4px;font-size:18px;color:#1a1a1a;white-space:pre;transform:scale(0.79,1.0);transform-origin:left center;">0</div><div style="position:absolute;left:79px;top:1252.71px;width:1015px;height:22.06px;background:#93ec93;border-bottom:1px solid #88b8a0;"></div><div style="position:absolute;left:217px;top:1252.71px;width:1px;height:22.06px;background:#8cb48c;"></div><div style="position:absolute;left:354px;top:1252.71px;width:1px;height:22.06px;background:#8cb48c;"></div><div style="position:absolute;left:492px;top:1252.71px;width:1px;height:22.06px;background:#8cb48c;"></div><div style="position:absolute;left:630px;top:1252.71px;width:1px;height:22.06px;background:#8cb48c;"></div><div style="position:absolute;left:768px;top:1252.71px;width:1px;height:22.06px;background:#8cb48c;"></div><div style="position:absolute;left:906px;top:1252.71px;width:1px;height:22.06px;background:#8cb48c;"></div><div style="position:absolute;left:1044px;top:1252.71px;width:1px;height:22.06px;background:#8cb48c;"></div><div style="position:absolute;left:83px;top:1253.41px;height:23.4px;line-height:23.4px;font-size:18px;color:#1a1a1a;white-space:pre;transform:scale(0.79,1.0);transform-origin:left center;">5(5)</div><div style="position:absolute;left:224.4px;top:1253.41px;height:23.4px;line-height:23.4px;font-size:18px;color:#4e9a4e;white-space:pre;transform:scale(0.9,1.0);transform-origin:left center;">Float 6 mm  A+W</div><div style="position:absolute;left:360px;top:1253.41px;height:23.4px;line-height:23.4px;font-size:18px;color:#1a1a1a;white-space:pre;transform:scale(0.79,1.0);transform-origin:left center;">1050 mm x 825 mm</div><div style="position:absolute;left:497px;top:1253.41px;height:23.4px;line-height:23.4px;font-size:18px;color:#1a1a1a;white-space:pre;transform:scale(0.79,1.0);transform-origin:left center;">9</div><div style="position:absolute;left:79px;top:1274.77px;width:1015px;height:22.06px;background:#acd8e6;border-bottom:1px solid #8aa6b0;"></div><div style="position:absolute;left:217px;top:1274.77px;width:1px;height:22.06px;background:#8aa6b0;"></div><div style="position:absolute;left:354px;top:1274.77px;width:1px;height:22.06px;background:#8aa6b0;"></div><div style="position:absolute;left:492px;top:1274.77px;width:1px;height:22.06px;background:#8aa6b0;"></div><div style="position:absolute;left:630px;top:1274.77px;width:1px;height:22.06px;background:#8aa6b0;"></div><div style="position:absolute;left:768px;top:1274.77px;width:1px;height:22.06px;background:#8aa6b0;"></div><div style="position:absolute;left:906px;top:1274.77px;width:1px;height:22.06px;background:#8aa6b0;"></div><div style="position:absolute;left:1044px;top:1274.77px;width:1px;height:22.06px;background:#8aa6b0;"></div><div style="position:absolute;left:235px;top:1274.77px;width:1px;height:22.06px;border-left:1px dotted #333;"></div><div style="position:absolute;left:236px;top:1287.17px;width:14px;height:1px;border-top:1px dotted #333;"></div><div style="position:absolute;left:250.6px;top:1275.47px;height:23.4px;line-height:23.4px;font-size:18px;color:#1a1a1a;white-space:pre;transform:scale(0.79,1.0);transform-origin:left center;">Packing</div><div style="position:absolute;left:636px;top:1275.47px;height:23.4px;line-height:23.4px;font-size:18px;color:#1a1a1a;white-space:pre;transform:scale(0.79,1.0);transform-origin:left center;">3000 / Delivery /...</div><div style="position:absolute;left:773.5px;top:1275.47px;height:23.4px;line-height:23.4px;font-size:18px;color:#1a1a1a;white-space:pre;transform:scale(0.79,1.0);transform-origin:left center;">23.07.24</div><div style="position:absolute;left:911.6px;top:1275.47px;height:23.4px;line-height:23.4px;font-size:18px;color:#1a1a1a;white-space:pre;transform:scale(0.79,1.0);transform-origin:left center;">0</div><div style="position:absolute;left:79px;top:1296.83px;width:1015px;height:22.06px;background:#acd8e6;border-bottom:1px solid #8aa6b0;"></div><div style="position:absolute;left:217px;top:1296.83px;width:1px;height:22.06px;background:#8aa6b0;"></div><div style="position:absolute;left:354px;top:1296.83px;width:1px;height:22.06px;background:#8aa6b0;"></div><div style="position:absolute;left:492px;top:1296.83px;width:1px;height:22.06px;background:#8aa6b0;"></div><div style="position:absolute;left:630px;top:1296.83px;width:1px;height:22.06px;background:#8aa6b0;"></div><div style="position:absolute;left:768px;top:1296.83px;width:1px;height:22.06px;background:#8aa6b0;"></div><div style="position:absolute;left:906px;top:1296.83px;width:1px;height:22.06px;background:#8aa6b0;"></div><div style="position:absolute;left:1044px;top:1296.83px;width:1px;height:22.06px;background:#8aa6b0;"></div><div style="position:absolute;left:235px;top:1296.83px;width:1px;height:22.06px;border-left:1px dotted #333;"></div><div style="position:absolute;left:236px;top:1309.23px;width:14px;height:1px;border-top:1px dotted #333;"></div><div style="position:absolute;left:250.6px;top:1297.53px;height:23.4px;line-height:23.4px;font-size:18px;color:#1a1a1a;white-space:pre;transform:scale(0.79,1.0);transform-origin:left center;">Packing</div><div style="position:absolute;left:636px;top:1297.53px;height:23.4px;line-height:23.4px;font-size:18px;color:#1a1a1a;white-space:pre;transform:scale(0.79,1.0);transform-origin:left center;">2910 / Packing /...</div><div style="position:absolute;left:773.5px;top:1297.53px;height:23.4px;line-height:23.4px;font-size:18px;color:#1a1a1a;white-space:pre;transform:scale(0.79,1.0);transform-origin:left center;">22.07.24</div><div style="position:absolute;left:911.6px;top:1297.53px;height:23.4px;line-height:23.4px;font-size:18px;color:#1a1a1a;white-space:pre;transform:scale(0.79,1.0);transform-origin:left center;">0</div><div style="position:absolute;left:79px;top:1318.89px;width:1015px;height:22.06px;background:#acd8e6;border-bottom:1px solid #8aa6b0;"></div><div style="position:absolute;left:217px;top:1318.89px;width:1px;height:22.06px;background:#8aa6b0;"></div><div style="position:absolute;left:354px;top:1318.89px;width:1px;height:22.06px;background:#8aa6b0;"></div><div style="position:absolute;left:492px;top:1318.89px;width:1px;height:22.06px;background:#8aa6b0;"></div><div style="position:absolute;left:630px;top:1318.89px;width:1px;height:22.06px;background:#8aa6b0;"></div><div style="position:absolute;left:768px;top:1318.89px;width:1px;height:22.06px;background:#8aa6b0;"></div><div style="position:absolute;left:906px;top:1318.89px;width:1px;height:22.06px;background:#8aa6b0;"></div><div style="position:absolute;left:1044px;top:1318.89px;width:1px;height:22.06px;background:#8aa6b0;"></div><div style="position:absolute;left:235px;top:1318.89px;width:1px;height:12.4px;border-left:1px dotted #333;"></div><div style="position:absolute;left:236px;top:1331.29px;width:14px;height:1px;border-top:1px dotted #333;"></div><div style="position:absolute;left:250.6px;top:1319.59px;height:23.4px;line-height:23.4px;font-size:18px;color:#1a1a1a;white-space:pre;transform:scale(0.79,1.0);transform-origin:left center;">Zuschnitt</div><div style="position:absolute;left:636px;top:1319.59px;height:23.4px;line-height:23.4px;font-size:18px;color:#1a1a1a;white-space:pre;transform:scale(0.79,1.0);transform-origin:left center;">110 / Cutting Ta...</div><div style="position:absolute;left:773.5px;top:1319.59px;height:23.4px;line-height:23.4px;font-size:18px;color:#1a1a1a;white-space:pre;transform:scale(0.79,1.0);transform-origin:left center;">19.07.24</div><div style="position:absolute;left:911.6px;top:1319.59px;height:23.4px;line-height:23.4px;font-size:18px;color:#1a1a1a;white-space:pre;transform:scale(0.79,1.0);transform-origin:left center;">0</div><div style="position:absolute;left:79px;top:1340.95px;width:1015px;height:22.06px;background:#93ec93;border-bottom:1px solid #88b8a0;"></div><div style="position:absolute;left:217px;top:1340.95px;width:1px;height:22.06px;background:#8cb48c;"></div><div style="position:absolute;left:354px;top:1340.95px;width:1px;height:22.06px;background:#8cb48c;"></div><div style="position:absolute;left:492px;top:1340.95px;width:1px;height:22.06px;background:#8cb48c;"></div><div style="position:absolute;left:630px;top:1340.95px;width:1px;height:22.06px;background:#8cb48c;"></div><div style="position:absolute;left:768px;top:1340.95px;width:1px;height:22.06px;background:#8cb48c;"></div><div style="position:absolute;left:906px;top:1340.95px;width:1px;height:22.06px;background:#8cb48c;"></div><div style="position:absolute;left:1044px;top:1340.95px;width:1px;height:22.06px;background:#8cb48c;"></div><div style="position:absolute;left:83px;top:1341.65px;height:23.4px;line-height:23.4px;font-size:18px;color:#1a1a1a;white-space:pre;transform:scale(0.79,1.0);transform-origin:left center;">6(6)</div><div style="position:absolute;left:224.4px;top:1341.65px;height:23.4px;line-height:23.4px;font-size:18px;color:#4e9a4e;white-space:pre;transform:scale(0.9,1.0);transform-origin:left center;">Float 6 mm  A+W</div><div style="position:absolute;left:360px;top:1341.65px;height:23.4px;line-height:23.4px;font-size:18px;color:#1a1a1a;white-space:pre;transform:scale(0.79,1.0);transform-origin:left center;">894 mm x 1294 mm</div><div style="position:absolute;left:497px;top:1341.65px;height:23.4px;line-height:23.4px;font-size:18px;color:#1a1a1a;white-space:pre;transform:scale(0.79,1.0);transform-origin:left center;">6</div><div style="position:absolute;left:79px;top:1363.01px;width:1015px;height:22.06px;background:#acd8e6;border-bottom:1px solid #8aa6b0;"></div><div style="position:absolute;left:217px;top:1363.01px;width:1px;height:22.06px;background:#8aa6b0;"></div><div style="position:absolute;left:354px;top:1363.01px;width:1px;height:22.06px;background:#8aa6b0;"></div><div style="position:absolute;left:492px;top:1363.01px;width:1px;height:22.06px;background:#8aa6b0;"></div><div style="position:absolute;left:630px;top:1363.01px;width:1px;height:22.06px;background:#8aa6b0;"></div><div style="position:absolute;left:768px;top:1363.01px;width:1px;height:22.06px;background:#8aa6b0;"></div><div style="position:absolute;left:906px;top:1363.01px;width:1px;height:22.06px;background:#8aa6b0;"></div><div style="position:absolute;left:1044px;top:1363.01px;width:1px;height:22.06px;background:#8aa6b0;"></div><div style="position:absolute;left:235px;top:1363.01px;width:1px;height:22.06px;border-left:1px dotted #333;"></div><div style="position:absolute;left:236px;top:1375.41px;width:14px;height:1px;border-top:1px dotted #333;"></div><div style="position:absolute;left:250.6px;top:1363.71px;height:23.4px;line-height:23.4px;font-size:18px;color:#1a1a1a;white-space:pre;transform:scale(0.79,1.0);transform-origin:left center;">Packing</div><div style="position:absolute;left:636px;top:1363.71px;height:23.4px;line-height:23.4px;font-size:18px;color:#1a1a1a;white-space:pre;transform:scale(0.79,1.0);transform-origin:left center;">3000 / Delivery /...</div><div style="position:absolute;left:773.5px;top:1363.71px;height:23.4px;line-height:23.4px;font-size:18px;color:#1a1a1a;white-space:pre;transform:scale(0.79,1.0);transform-origin:left center;">23.07.24</div><div style="position:absolute;left:911.6px;top:1363.71px;height:23.4px;line-height:23.4px;font-size:18px;color:#1a1a1a;white-space:pre;transform:scale(0.79,1.0);transform-origin:left center;">0</div><div style="position:absolute;left:79px;top:1385.07px;width:1015px;height:22.06px;background:#acd8e6;border-bottom:1px solid #8aa6b0;"></div><div style="position:absolute;left:217px;top:1385.07px;width:1px;height:22.06px;background:#8aa6b0;"></div><div style="position:absolute;left:354px;top:1385.07px;width:1px;height:22.06px;background:#8aa6b0;"></div><div style="position:absolute;left:492px;top:1385.07px;width:1px;height:22.06px;background:#8aa6b0;"></div><div style="position:absolute;left:630px;top:1385.07px;width:1px;height:22.06px;background:#8aa6b0;"></div><div style="position:absolute;left:768px;top:1385.07px;width:1px;height:22.06px;background:#8aa6b0;"></div><div style="position:absolute;left:906px;top:1385.07px;width:1px;height:22.06px;background:#8aa6b0;"></div><div style="position:absolute;left:1044px;top:1385.07px;width:1px;height:22.06px;background:#8aa6b0;"></div><div style="position:absolute;left:235px;top:1385.07px;width:1px;height:22.06px;border-left:1px dotted #333;"></div><div style="position:absolute;left:236px;top:1397.47px;width:14px;height:1px;border-top:1px dotted #333;"></div><div style="position:absolute;left:250.6px;top:1385.77px;height:23.4px;line-height:23.4px;font-size:18px;color:#1a1a1a;white-space:pre;transform:scale(0.79,1.0);transform-origin:left center;">Packing</div><div style="position:absolute;left:636px;top:1385.77px;height:23.4px;line-height:23.4px;font-size:18px;color:#1a1a1a;white-space:pre;transform:scale(0.79,1.0);transform-origin:left center;">2910 / Packing /...</div><div style="position:absolute;left:773.5px;top:1385.77px;height:23.4px;line-height:23.4px;font-size:18px;color:#1a1a1a;white-space:pre;transform:scale(0.79,1.0);transform-origin:left center;">18.07.24</div><div style="position:absolute;left:911.6px;top:1385.77px;height:23.4px;line-height:23.4px;font-size:18px;color:#1a1a1a;white-space:pre;transform:scale(0.79,1.0);transform-origin:left center;">0</div><div style="position:absolute;left:79px;top:1407.13px;width:1015px;height:22.06px;background:#acd8e6;border-bottom:1px solid #8aa6b0;"></div><div style="position:absolute;left:217px;top:1407.13px;width:1px;height:22.06px;background:#8aa6b0;"></div><div style="position:absolute;left:354px;top:1407.13px;width:1px;height:22.06px;background:#8aa6b0;"></div><div style="position:absolute;left:492px;top:1407.13px;width:1px;height:22.06px;background:#8aa6b0;"></div><div style="position:absolute;left:630px;top:1407.13px;width:1px;height:22.06px;background:#8aa6b0;"></div><div style="position:absolute;left:768px;top:1407.13px;width:1px;height:22.06px;background:#8aa6b0;"></div><div style="position:absolute;left:906px;top:1407.13px;width:1px;height:22.06px;background:#8aa6b0;"></div><div style="position:absolute;left:1044px;top:1407.13px;width:1px;height:22.06px;background:#8aa6b0;"></div><div style="position:absolute;left:235px;top:1407.13px;width:1px;height:12.4px;border-left:1px dotted #333;"></div><div style="position:absolute;left:236px;top:1419.53px;width:14px;height:1px;border-top:1px dotted #333;"></div><div style="position:absolute;left:250.6px;top:1407.83px;height:23.4px;line-height:23.4px;font-size:18px;color:#1a1a1a;white-space:pre;transform:scale(0.79,1.0);transform-origin:left center;">Zuschnitt</div><div style="position:absolute;left:636px;top:1407.83px;height:23.4px;line-height:23.4px;font-size:18px;color:#1a1a1a;white-space:pre;transform:scale(0.79,1.0);transform-origin:left center;">110 / Cutting Ta...</div><div style="position:absolute;left:773.5px;top:1407.83px;height:23.4px;line-height:23.4px;font-size:18px;color:#1a1a1a;white-space:pre;transform:scale(0.79,1.0);transform-origin:left center;">17.07.24</div><div style="position:absolute;left:911.6px;top:1407.83px;height:23.4px;line-height:23.4px;font-size:18px;color:#1a1a1a;white-space:pre;transform:scale(0.79,1.0);transform-origin:left center;">0</div><div style="position:absolute;left:79px;top:1465px;width:1015px;height:21px;background:#f0f0f0;"></div><div style="position:absolute;left:101px;top:1466px;width:575px;height:19px;background:#cdcdcd;"></div><svg style="position:absolute;left:83px;top:1467px;" width="14" height="16" viewBox="0 0 14 16"><path d="M10 3 L4 8 L10 13" stroke="#555" stroke-width="2.2" fill="none"/></svg><svg style="position:absolute;left:1075px;top:1467px;" width="14" height="16" viewBox="0 0 14 16"><path d="M4 3 L10 8 L4 13" stroke="#555" stroke-width="2.2" fill="none"/></svg><div style="position:absolute;left:82px;top:1494.95px;height:22.1px;line-height:22.1px;font-size:17px;color:#2a2a2a;white-space:pre;transform:scale(0.84,1.0);transform-origin:left center;">Press F2 to toggle detailed list</div><div style="position:absolute;left:33px;top:835.5px;width:2296px;height:1.6px;background:#5a5f66;"></div><div style="position:absolute;left:1108px;top:836px;width:304px;height:89px;background:#dbe6f2;border-left:1px solid #6a7078;border-bottom:1px solid #8a98a8;"></div><div style="position:absolute;left:1109px;top:837px;width:292.5px;height:77px;background:#f0f0f0;"></div><div style="position:absolute;left:1110px;top:889px;width:290px;height:1.5px;background:#dedede;"></div><div style="position:absolute;left:1400px;top:837px;width:1px;height:52px;background:#e2e2e2;"></div><svg style="position:absolute;left:1385px;top:900px;" width="14" height="12" viewBox="0 0 14 12"><g fill="#b8b8b8"><rect x="10" y="1" width="2" height="2"/><rect x="6" y="5" width="2" height="2"/><rect x="10" y="5" width="2" height="2"/><rect x="2" y="9" width="2" height="2"/><rect x="6" y="9" width="2" height="2"/><rect x="10" y="9" width="2" height="2"/></g></svg><div style="position:absolute;left:1431px;top:848px;width:584px;height:699px;background:#f0f0f0;border:1px solid #b8c8dc;"></div><div style="position:absolute;left:1432px;top:849px;width:582px;height:41px;background:#ffffff;"></div><div style="position:absolute;left:1444px;top:857.62px;height:22.75px;line-height:22.75px;font-size:17.5px;color:#1a1a1a;white-space:pre;transform:scale(0.905,1.0);transform-origin:left center;">Create batch</div><div style="position:absolute;left:1319.5px;width:1200px;text-align:center;top:857.6px;height:20.8px;line-height:20.8px;font-size:16px;color:#333;white-space:pre;">?</div><svg style="position:absolute;left:1970px;top:858px;" width="22" height="22" viewBox="0 0 22 22"><path d="M4 4 L18 18 M18 4 L4 18" stroke="#333" stroke-width="1.6"/></svg><div style="position:absolute;left:1444px;top:916.95px;height:22.1px;line-height:22.1px;font-size:17px;color:#222;white-space:pre;transform:scale(0.855,1.0);transform-origin:left center;">Batch</div><div style="position:absolute;left:1444px;top:949.75px;height:22.1px;line-height:22.1px;font-size:17px;color:#222;white-space:pre;transform:scale(0.855,1.0);transform-origin:left center;">Designation</div><div style="position:absolute;left:1444px;top:993.75px;height:22.1px;line-height:22.1px;font-size:17px;color:#222;white-space:pre;transform:scale(0.855,1.0);transform-origin:left center;">Description</div><div style="position:absolute;left:1444px;top:1036.55px;height:22.1px;line-height:22.1px;font-size:17px;color:#222;white-space:pre;transform:scale(0.855,1.0);transform-origin:left center;">Detailed scheduling</div><div style="position:absolute;left:1444px;top:1110.75px;height:22.1px;line-height:22.1px;font-size:17px;color:#222;white-space:pre;transform:scale(0.855,1.0);transform-origin:left center;">Production date</div><div style="position:absolute;left:1444px;top:1351.65px;height:22.1px;line-height:22.1px;font-size:17px;color:#222;white-space:pre;transform:scale(0.855,1.0);transform-origin:left center;">Production shift</div><div style="position:absolute;left:1444px;top:1387.35px;height:22.1px;line-height:22.1px;font-size:17px;color:#222;white-space:pre;transform:scale(0.855,1.0);transform-origin:left center;">Article type filter</div><div style="position:absolute;left:1597px;top:908px;width:391px;height:29px;background:#fff;border:1px solid #a0a0a0;"></div><div style="position:absolute;left:1601px;top:910.45px;height:22.1px;line-height:22.1px;font-size:17px;color:#333;white-space:pre;transform:scale(0.8,1.0);transform-origin:left center;">7104 :</div><svg style="position:absolute;left:1965px;top:913px;" width="18" height="16" viewBox="0 0 18 16"><path d="M3 5 L9 11 L15 5" stroke="#444" stroke-width="1.5" fill="none"/></svg><div style="position:absolute;left:1597px;top:948px;width:391px;height:27px;background:#fff;border:1px solid #a0a0a0;"></div><div style="position:absolute;left:1600px;top:950.45px;height:22.1px;line-height:22.1px;font-size:17px;color:#333;white-space:pre;transform:scale(0.83,1.0);transform-origin:left center;">Optimization</div><div style="position:absolute;left:1597px;top:990.5px;width:391px;height:28px;background:#fff;border:1.5px solid #4a9ad8;"></div><div style="position:absolute;left:1602px;top:996px;width:1.3px;height:17px;background:#111;"></div><div style="position:absolute;left:1597px;top:1037px;width:391px;height:28px;background:#e3e3e3;border:1px solid #c4c4c4;"></div><div style="position:absolute;left:1603px;top:1040.12px;height:22.75px;line-height:22.75px;font-size:17.5px;color:#333;white-space:pre;transform:scale(0.85,1.0);transform-origin:left center;">AUW</div><svg style="position:absolute;left:1965px;top:1043px;" width="18" height="16" viewBox="0 0 18 16"><path d="M3 5 L9 11 L15 5" stroke="#444" stroke-width="1.5" fill="none"/></svg><div style="position:absolute;left:1597px;top:1068.5px;width:17px;height:17px;border:1.2px solid #333;background:#fff;"></div><div style="position:absolute;left:1620px;top:1065.95px;height:22.1px;line-height:22.1px;font-size:17px;color:#222;white-space:pre;transform:scale(0.854,1.0);transform-origin:left center;">Use selected organisation as default</div><div style="position:absolute;left:1597px;top:1109px;width:391px;height:221px;background:#fff;"></div><div style="position:absolute;left:1622.6px;top:1109.5px;width:339px;height:220px;border:1px solid #a8a8a8;background:#fff;"></div><svg style="position:absolute;left:1632px;top:1127px;" width="12" height="14" viewBox="0 0 12 14"><path d="M9 2 L3 7 L9 12 Z" fill="#222"/></svg><svg style="position:absolute;left:1941px;top:1127px;" width="12" height="14" viewBox="0 0 12 14"><path d="M3 2 L9 7 L3 12 Z" fill="#222"/></svg><div style="position:absolute;left:1192.4px;width:1200px;text-align:center;top:1123.45px;height:22.1px;line-height:22.1px;font-size:17px;color:#222;white-space:pre;transform:scale(0.885,1.0);transform-origin:center center;">July 2024</div><div style="position:absolute;left:1075.4px;width:1200px;text-align:center;top:1154.76px;height:22.49px;line-height:22.49px;font-size:17.3px;color:#222;white-space:pre;transform:scale(0.95,1.0);transform-origin:center center;">Mon</div><div style="position:absolute;left:1118.5px;width:1200px;text-align:center;top:1154.76px;height:22.49px;line-height:22.49px;font-size:17.3px;color:#222;white-space:pre;transform:scale(0.95,1.0);transform-origin:center center;">Tue</div><div style="position:absolute;left:1160px;width:1200px;text-align:center;top:1154.76px;height:22.49px;line-height:22.49px;font-size:17.3px;color:#222;white-space:pre;transform:scale(0.95,1.0);transform-origin:center center;">Wed</div><div style="position:absolute;left:1203px;width:1200px;text-align:center;top:1154.76px;height:22.49px;line-height:22.49px;font-size:17.3px;color:#222;white-space:pre;transform:scale(0.95,1.0);transform-origin:center center;">Thu</div><div style="position:absolute;left:1246px;width:1200px;text-align:center;top:1154.76px;height:22.49px;line-height:22.49px;font-size:17.3px;color:#222;white-space:pre;transform:scale(0.95,1.0);transform-origin:center center;">Fri</div><div style="position:absolute;left:1288px;width:1200px;text-align:center;top:1154.76px;height:22.49px;line-height:22.49px;font-size:17.3px;color:#222;white-space:pre;transform:scale(0.95,1.0);transform-origin:center center;">Sat</div><div style="position:absolute;left:1331px;width:1200px;text-align:center;top:1154.76px;height:22.49px;line-height:22.49px;font-size:17.3px;color:#222;white-space:pre;transform:scale(0.95,1.0);transform-origin:center center;">Sun</div><div style="position:absolute;left:1653px;top:1183px;width:2px;height:112px;background:#444;"></div><div style="position:absolute;left:1825px;top:1177.5px;width:42.4px;height:19.5px;border:2px solid #3a86c8;"></div><div style="position:absolute;left:1739.6px;top:1238.4px;width:42.4px;height:20.1px;background:#d9d9d9;"></div><div style="position:absolute;left:483.70000000000005px;width:1200px;text-align:right;top:1176.36px;height:22.49px;line-height:22.49px;font-size:17.3px;color:#8a8a8a;white-space:pre;transform:scale(0.8,1.0);transform-origin:right center;">24</div><div style="position:absolute;left:526.5699999999999px;width:1200px;text-align:right;top:1176.36px;height:22.49px;line-height:22.49px;font-size:17.3px;color:#8a8a8a;white-space:pre;transform:scale(0.8,1.0);transform-origin:right center;">25</div><div style="position:absolute;left:569.44px;width:1200px;text-align:right;top:1176.36px;height:22.49px;line-height:22.49px;font-size:17.3px;color:#8a8a8a;white-space:pre;transform:scale(0.8,1.0);transform-origin:right center;">26</div><div style="position:absolute;left:612.31px;width:1200px;text-align:right;top:1176.36px;height:22.49px;line-height:22.49px;font-size:17.3px;color:#8a8a8a;white-space:pre;transform:scale(0.8,1.0);transform-origin:right center;">27</div><div style="position:absolute;left:655.1800000000001px;width:1200px;text-align:right;top:1176.36px;height:22.49px;line-height:22.49px;font-size:17.3px;color:#3a6aa8;white-space:pre;transform:scale(0.8,1.0);transform-origin:right center;">28</div><div style="position:absolute;left:698.05px;width:1200px;text-align:right;top:1176.36px;height:22.49px;line-height:22.49px;font-size:17.3px;color:#8a8a8a;white-space:pre;transform:scale(0.8,1.0);transform-origin:right center;">29</div><div style="position:absolute;left:740.9200000000001px;width:1200px;text-align:right;top:1176.36px;height:22.49px;line-height:22.49px;font-size:17.3px;color:#8a8a8a;white-space:pre;transform:scale(0.8,1.0);transform-origin:right center;">30</div><div style="position:absolute;left:447.70000000000005px;width:1200px;text-align:right;top:1196.96px;height:22.49px;line-height:22.49px;font-size:17.3px;color:#222;white-space:pre;transform:scale(0.8,1.0);transform-origin:right center;">27</div><div style="position:absolute;left:483.70000000000005px;width:1200px;text-align:right;top:1196.96px;height:22.49px;line-height:22.49px;font-size:17.3px;color:#222;white-space:pre;transform:scale(0.8,1.0);transform-origin:right center;">1</div><div style="position:absolute;left:526.5699999999999px;width:1200px;text-align:right;top:1196.96px;height:22.49px;line-height:22.49px;font-size:17.3px;color:#222;white-space:pre;transform:scale(0.8,1.0);transform-origin:right center;">2</div><div style="position:absolute;left:569.44px;width:1200px;text-align:right;top:1196.96px;height:22.49px;line-height:22.49px;font-size:17.3px;color:#222;white-space:pre;transform:scale(0.8,1.0);transform-origin:right center;">3</div><div style="position:absolute;left:612.31px;width:1200px;text-align:right;top:1196.96px;height:22.49px;line-height:22.49px;font-size:17.3px;color:#222;white-space:pre;transform:scale(0.8,1.0);transform-origin:right center;">4</div><div style="position:absolute;left:655.1800000000001px;width:1200px;text-align:right;top:1196.96px;height:22.49px;line-height:22.49px;font-size:17.3px;color:#222;white-space:pre;transform:scale(0.8,1.0);transform-origin:right center;">5</div><div style="position:absolute;left:698.05px;width:1200px;text-align:right;top:1196.96px;height:22.49px;line-height:22.49px;font-size:17.3px;color:#222;white-space:pre;transform:scale(0.8,1.0);transform-origin:right center;">6</div><div style="position:absolute;left:740.9200000000001px;width:1200px;text-align:right;top:1196.96px;height:22.49px;line-height:22.49px;font-size:17.3px;color:#222;white-space:pre;transform:scale(0.8,1.0);transform-origin:right center;">7</div><div style="position:absolute;left:447.70000000000005px;width:1200px;text-align:right;top:1217.36px;height:22.49px;line-height:22.49px;font-size:17.3px;color:#222;white-space:pre;transform:scale(0.8,1.0);transform-origin:right center;">28</div><div style="position:absolute;left:483.70000000000005px;width:1200px;text-align:right;top:1217.36px;height:22.49px;line-height:22.49px;font-size:17.3px;color:#222;white-space:pre;transform:scale(0.8,1.0);transform-origin:right center;">8</div><div style="position:absolute;left:526.5699999999999px;width:1200px;text-align:right;top:1217.36px;height:22.49px;line-height:22.49px;font-size:17.3px;color:#222;white-space:pre;transform:scale(0.8,1.0);transform-origin:right center;">9</div><div style="position:absolute;left:569.44px;width:1200px;text-align:right;top:1217.36px;height:22.49px;line-height:22.49px;font-size:17.3px;color:#222;white-space:pre;transform:scale(0.8,1.0);transform-origin:right center;">10</div><div style="position:absolute;left:612.31px;width:1200px;text-align:right;top:1217.36px;height:22.49px;line-height:22.49px;font-size:17.3px;color:#222;white-space:pre;transform:scale(0.8,1.0);transform-origin:right center;">11</div><div style="position:absolute;left:655.1800000000001px;width:1200px;text-align:right;top:1217.36px;height:22.49px;line-height:22.49px;font-size:17.3px;color:#222;white-space:pre;transform:scale(0.8,1.0);transform-origin:right center;">12</div><div style="position:absolute;left:698.05px;width:1200px;text-align:right;top:1217.36px;height:22.49px;line-height:22.49px;font-size:17.3px;color:#222;white-space:pre;transform:scale(0.8,1.0);transform-origin:right center;">13</div><div style="position:absolute;left:740.9200000000001px;width:1200px;text-align:right;top:1217.36px;height:22.49px;line-height:22.49px;font-size:17.3px;color:#222;white-space:pre;transform:scale(0.8,1.0);transform-origin:right center;">14</div><div style="position:absolute;left:447.70000000000005px;width:1200px;text-align:right;top:1237.76px;height:22.49px;line-height:22.49px;font-size:17.3px;color:#222;white-space:pre;transform:scale(0.8,1.0);transform-origin:right center;">29</div><div style="position:absolute;left:483.70000000000005px;width:1200px;text-align:right;top:1237.76px;height:22.49px;line-height:22.49px;font-size:17.3px;color:#222;white-space:pre;transform:scale(0.8,1.0);transform-origin:right center;">15</div><div style="position:absolute;left:526.5699999999999px;width:1200px;text-align:right;top:1237.76px;height:22.49px;line-height:22.49px;font-size:17.3px;color:#222;white-space:pre;transform:scale(0.8,1.0);transform-origin:right center;">16</div><div style="position:absolute;left:569.44px;width:1200px;text-align:right;top:1237.76px;height:22.49px;line-height:22.49px;font-size:17.3px;color:#222;white-space:pre;transform:scale(0.8,1.0);transform-origin:right center;">17</div><div style="position:absolute;left:612.31px;width:1200px;text-align:right;top:1237.76px;height:22.49px;line-height:22.49px;font-size:17.3px;color:#222;white-space:pre;transform:scale(0.8,1.0);transform-origin:right center;">18</div><div style="position:absolute;left:655.1800000000001px;width:1200px;text-align:right;top:1237.76px;height:22.49px;line-height:22.49px;font-size:17.3px;color:#222;white-space:pre;transform:scale(0.8,1.0);transform-origin:right center;">19</div><div style="position:absolute;left:698.05px;width:1200px;text-align:right;top:1237.76px;height:22.49px;line-height:22.49px;font-size:17.3px;color:#222;white-space:pre;transform:scale(0.8,1.0);transform-origin:right center;">20</div><div style="position:absolute;left:740.9200000000001px;width:1200px;text-align:right;top:1237.76px;height:22.49px;line-height:22.49px;font-size:17.3px;color:#222;white-space:pre;transform:scale(0.8,1.0);transform-origin:right center;">21</div><div style="position:absolute;left:447.70000000000005px;width:1200px;text-align:right;top:1258.46px;height:22.49px;line-height:22.49px;font-size:17.3px;color:#222;white-space:pre;transform:scale(0.8,1.0);transform-origin:right center;">30</div><div style="position:absolute;left:483.70000000000005px;width:1200px;text-align:right;top:1258.46px;height:22.49px;line-height:22.49px;font-size:17.3px;color:#222;white-space:pre;transform:scale(0.8,1.0);transform-origin:right center;">22</div><div style="position:absolute;left:526.5699999999999px;width:1200px;text-align:right;top:1258.46px;height:22.49px;line-height:22.49px;font-size:17.3px;color:#222;white-space:pre;transform:scale(0.8,1.0);transform-origin:right center;">23</div><div style="position:absolute;left:569.44px;width:1200px;text-align:right;top:1258.46px;height:22.49px;line-height:22.49px;font-size:17.3px;color:#222;white-space:pre;transform:scale(0.8,1.0);transform-origin:right center;">24</div><div style="position:absolute;left:612.31px;width:1200px;text-align:right;top:1258.46px;height:22.49px;line-height:22.49px;font-size:17.3px;color:#222;white-space:pre;transform:scale(0.8,1.0);transform-origin:right center;">25</div><div style="position:absolute;left:655.1800000000001px;width:1200px;text-align:right;top:1258.46px;height:22.49px;line-height:22.49px;font-size:17.3px;color:#222;white-space:pre;transform:scale(0.8,1.0);transform-origin:right center;">26</div><div style="position:absolute;left:698.05px;width:1200px;text-align:right;top:1258.46px;height:22.49px;line-height:22.49px;font-size:17.3px;color:#222;white-space:pre;transform:scale(0.8,1.0);transform-origin:right center;">27</div><div style="position:absolute;left:740.9200000000001px;width:1200px;text-align:right;top:1258.46px;height:22.49px;line-height:22.49px;font-size:17.3px;color:#222;white-space:pre;transform:scale(0.8,1.0);transform-origin:right center;">28</div><div style="position:absolute;left:447.70000000000005px;width:1200px;text-align:right;top:1279.36px;height:22.49px;line-height:22.49px;font-size:17.3px;color:#222;white-space:pre;transform:scale(0.8,1.0);transform-origin:right center;">31</div><div style="position:absolute;left:483.70000000000005px;width:1200px;text-align:right;top:1279.36px;height:22.49px;line-height:22.49px;font-size:17.3px;color:#222;white-space:pre;transform:scale(0.8,1.0);transform-origin:right center;">29</div><div style="position:absolute;left:526.5699999999999px;width:1200px;text-align:right;top:1279.36px;height:22.49px;line-height:22.49px;font-size:17.3px;color:#222;white-space:pre;transform:scale(0.8,1.0);transform-origin:right center;">30</div><div style="position:absolute;left:569.44px;width:1200px;text-align:right;top:1279.36px;height:22.49px;line-height:22.49px;font-size:17.3px;color:#222;white-space:pre;transform:scale(0.8,1.0);transform-origin:right center;">31</div><div style="position:absolute;left:612.31px;width:1200px;text-align:right;top:1279.36px;height:22.49px;line-height:22.49px;font-size:17.3px;color:#8a8a8a;white-space:pre;transform:scale(0.8,1.0);transform-origin:right center;">1</div><div style="position:absolute;left:655.1800000000001px;width:1200px;text-align:right;top:1279.36px;height:22.49px;line-height:22.49px;font-size:17.3px;color:#8a8a8a;white-space:pre;transform:scale(0.8,1.0);transform-origin:right center;">2</div><div style="position:absolute;left:698.05px;width:1200px;text-align:right;top:1279.36px;height:22.49px;line-height:22.49px;font-size:17.3px;color:#8a8a8a;white-space:pre;transform:scale(0.8,1.0);transform-origin:right center;">3</div><div style="position:absolute;left:740.9200000000001px;width:1200px;text-align:right;top:1279.36px;height:22.49px;line-height:22.49px;font-size:17.3px;color:#8a8a8a;white-space:pre;transform:scale(0.8,1.0);transform-origin:right center;">4</div><div style="position:absolute;left:1716.4px;top:1304px;width:38.6px;height:17.4px;border:2px solid #3a86c8;"></div><div style="position:absolute;left:1763.5px;top:1301.55px;height:22.1px;line-height:22.1px;font-size:17px;color:#222;white-space:pre;transform:scale(0.92,1.0);transform-origin:left center;">Today: 2024-06-28</div><div style="position:absolute;left:1597px;top:1349px;width:87px;height:27.5px;background:#fff;border:1px solid #a0a0a0;"></div><div style="position:absolute;left:1602px;top:1351.65px;height:22.1px;line-height:22.1px;font-size:17px;color:#333;white-space:pre;transform:scale(0.8,1.0);transform-origin:left center;">3</div><div style="position:absolute;left:1597px;top:1384px;width:346.4px;height:28.5px;background:#fff;border:1px solid #a0a0a0;"></div><div style="position:absolute;left:1600px;top:1385.95px;height:22.1px;line-height:22.1px;font-size:17px;color:#333;white-space:pre;transform:scale(0.84,1.0);transform-origin:left center;">Unfiltered</div><svg style="position:absolute;left:1920px;top:1390px;" width="18" height="16" viewBox="0 0 18 16"><path d="M3 5 L9 11 L15 5" stroke="#444" stroke-width="1.5" fill="none"/></svg><div style="position:absolute;left:1600px;top:1427px;width:18px;height:17.5px;border:1.3px solid #333;background:#fff;"></div><svg style="position:absolute;left:1600px;top:1427px;" width="18" height="18" viewBox="0 0 18 18"><path d="M3.5 9 L7.5 13.5 L14.5 4" stroke="#222" stroke-width="1.5" fill="none"/></svg><div style="position:absolute;left:1622px;top:1423.95px;height:22.1px;line-height:22.1px;font-size:17px;color:#222;white-space:pre;transform:scale(0.84,1.0);transform-origin:left center;">Keep order together</div><div style="position:absolute;left:1600px;top:1453.8px;width:18px;height:18px;border:1.3px solid #333;background:#fff;"></div><div style="position:absolute;left:1622px;top:1451.95px;height:22.1px;line-height:22.1px;font-size:17px;color:#222;white-space:pre;transform:scale(0.84,1.0);transform-origin:left center;">Keep prod. item together</div><div style="position:absolute;left:1694px;top:1486px;width:137.4px;height:42.3px;background:#e1e1e1;border:1px solid #adadad;"></div><div style="position:absolute;left:1853.3px;top:1486px;width:138.4px;height:42.3px;background:#e1e1e1;border:1px solid #adadad;"></div><svg style="position:absolute;left:1698px;top:1490px;" width="34" height="34" viewBox="0 0 34 34"><defs><radialGradient id="okg" cx="0.4" cy="0.35" r="0.7"><stop offset="0" stop-color="#8af08a"/><stop offset="1" stop-color="#1a9a1a"/></radialGradient></defs><circle cx="16.4" cy="16" r="15" fill="url(#okg)" stroke="#178a17"/><path d="M8 16 L14 22 L25 10" stroke="#fff" stroke-width="4.5" fill="none"/></svg><svg style="position:absolute;left:1858px;top:1490px;" width="34" height="34" viewBox="0 0 34 34"><defs><radialGradient id="cag" cx="0.4" cy="0.35" r="0.7"><stop offset="0" stop-color="#ffb08a"/><stop offset="1" stop-color="#e04a20"/></radialGradient></defs><circle cx="16.2" cy="16" r="15" fill="url(#cag)" stroke="#c03a10"/><path d="M10 10 L22 22 M22 10 L10 22" stroke="#fff" stroke-width="4.5"/></svg><div style="position:absolute;left:625px;width:1200px;text-align:right;top:1494.62px;height:22.75px;line-height:22.75px;font-size:17.5px;color:#222;white-space:pre;transform:scale(0.9,1.0);transform-origin:right center;">OK</div><div style="position:absolute;left:783.7px;width:1200px;text-align:right;top:1494.62px;height:22.75px;line-height:22.75px;font-size:17.5px;color:#222;white-space:pre;transform:scale(0.9,1.0);transform-origin:right center;">Cancel</div>
</body></html>
